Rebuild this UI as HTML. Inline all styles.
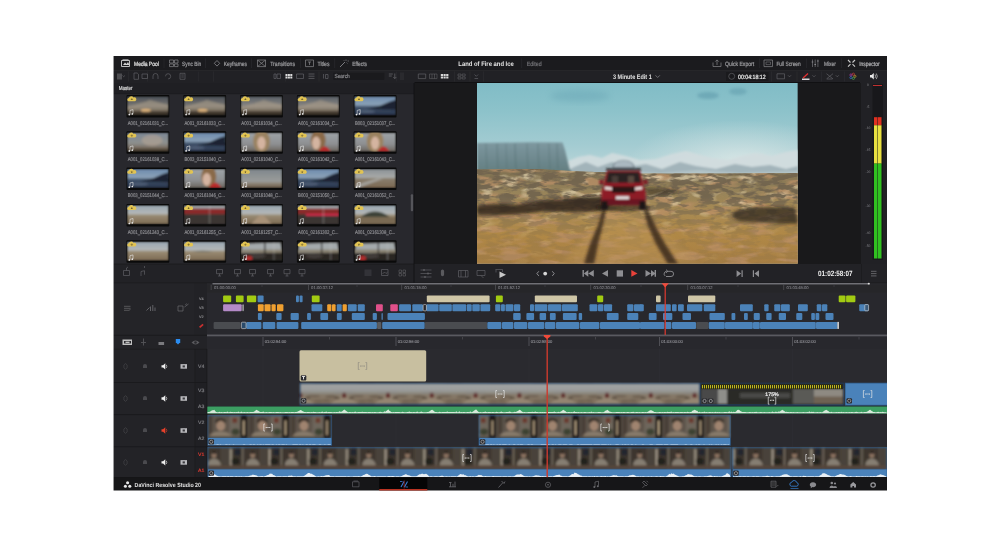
<!DOCTYPE html><html><head><meta charset="utf-8"><style>html,body{margin:0;padding:0;background:#fff;width:1000px;height:547px;overflow:hidden;}#w{position:absolute;left:0;top:0;width:1000px;height:547px;will-change:transform;}svg{position:absolute;left:0;top:0;}text{text-rendering:geometricPrecision;}</style></head><body>
<div id="w">
<svg width="1000" height="547" viewBox="0 0 1000 547" font-family="Liberation Sans">
<defs><filter id="tb" x="-10%" y="-10%" width="120%" height="120%"><feGaussianBlur stdDeviation="0.9"/></filter><linearGradient id="tg1" x1="0" y1="0" x2="0" y2="1"><stop offset="0" stop-color="#4a5058"/><stop offset="0.5" stop-color="#787672"/><stop offset="0.72" stop-color="#8a7e6c"/><stop offset="0.8" stop-color="#4a4036"/><stop offset="1" stop-color="#2e2822"/></linearGradient><linearGradient id="tg2" x1="0" y1="0" x2="0" y2="1"><stop offset="0" stop-color="#4a5058"/><stop offset="0.5" stop-color="#787672"/><stop offset="0.72" stop-color="#8a7e6c"/><stop offset="0.8" stop-color="#4a4036"/><stop offset="1" stop-color="#2e2822"/></linearGradient><linearGradient id="tg3" x1="0" y1="0" x2="0" y2="1"><stop offset="0" stop-color="#5a6068"/><stop offset="0.5" stop-color="#868480"/><stop offset="0.72" stop-color="#8a7e6c"/><stop offset="0.8" stop-color="#4a4036"/><stop offset="1" stop-color="#2e2822"/></linearGradient><linearGradient id="tg4" x1="0" y1="0" x2="0" y2="1"><stop offset="0" stop-color="#5a6068"/><stop offset="0.5" stop-color="#868480"/><stop offset="0.72" stop-color="#8a7e6c"/><stop offset="0.8" stop-color="#4a4036"/><stop offset="1" stop-color="#2e2822"/></linearGradient><linearGradient id="tg5" x1="0" y1="0" x2="0" y2="1"><stop offset="0" stop-color="#6c8aac"/><stop offset="0.45" stop-color="#8ca2b8"/><stop offset="0.55" stop-color="#42546c"/><stop offset="1" stop-color="#26324a"/></linearGradient><linearGradient id="tg6" x1="0" y1="0" x2="0" y2="1"><stop offset="0" stop-color="#7c8896"/><stop offset="0.55" stop-color="#8e908e"/><stop offset="0.78" stop-color="#7a7064"/><stop offset="0.85" stop-color="#5a4e40"/><stop offset="1" stop-color="#3e342a"/></linearGradient><linearGradient id="tg7" x1="0" y1="0" x2="0" y2="1"><stop offset="0" stop-color="#6c8aac"/><stop offset="0.45" stop-color="#8ca2b8"/><stop offset="0.55" stop-color="#42546c"/><stop offset="1" stop-color="#26324a"/></linearGradient><linearGradient id="tg8" x1="0" y1="0" x2="0" y2="1"><stop offset="0" stop-color="#9ea4a8"/><stop offset="0.6" stop-color="#8e9092"/><stop offset="1" stop-color="#6a645c"/></linearGradient><linearGradient id="tg9" x1="0" y1="0" x2="0" y2="1"><stop offset="0" stop-color="#9ea4a8"/><stop offset="0.6" stop-color="#8e9092"/><stop offset="1" stop-color="#6a645c"/></linearGradient><linearGradient id="tg10" x1="0" y1="0" x2="0" y2="1"><stop offset="0" stop-color="#9ea4a8"/><stop offset="0.6" stop-color="#8e9092"/><stop offset="1" stop-color="#6a645c"/></linearGradient><linearGradient id="tg11" x1="0" y1="0" x2="0" y2="1"><stop offset="0" stop-color="#6c8aac"/><stop offset="0.45" stop-color="#8ca2b8"/><stop offset="0.55" stop-color="#42546c"/><stop offset="1" stop-color="#26324a"/></linearGradient><linearGradient id="tg12" x1="0" y1="0" x2="0" y2="1"><stop offset="0" stop-color="#9ea4a8"/><stop offset="0.6" stop-color="#8e9092"/><stop offset="1" stop-color="#6a645c"/></linearGradient><linearGradient id="tg13" x1="0" y1="0" x2="0" y2="1"><stop offset="0" stop-color="#7e868c"/><stop offset="0.65" stop-color="#9a9c9a"/><stop offset="0.78" stop-color="#8a8070"/><stop offset="1" stop-color="#6a5a48"/></linearGradient><linearGradient id="tg14" x1="0" y1="0" x2="0" y2="1"><stop offset="0" stop-color="#6c8aac"/><stop offset="0.45" stop-color="#8ca2b8"/><stop offset="0.55" stop-color="#42546c"/><stop offset="1" stop-color="#26324a"/></linearGradient><linearGradient id="tg15" x1="0" y1="0" x2="0" y2="1"><stop offset="0" stop-color="#8a9096"/><stop offset="0.45" stop-color="#a8aaa8"/><stop offset="0.5" stop-color="#8a8070"/><stop offset="1" stop-color="#7a6650"/></linearGradient><linearGradient id="tg16" x1="0" y1="0" x2="0" y2="1"><stop offset="0" stop-color="#98a6b0"/><stop offset="0.45" stop-color="#b4b8b8"/><stop offset="0.52" stop-color="#9a8c74"/><stop offset="1" stop-color="#7c6a52"/></linearGradient><linearGradient id="tg17" x1="0" y1="0" x2="0" y2="1"><stop offset="0" stop-color="#98a6b0"/><stop offset="0.45" stop-color="#b4b8b8"/><stop offset="0.52" stop-color="#9a8c74"/><stop offset="1" stop-color="#7c6a52"/></linearGradient><linearGradient id="tg18" x1="0" y1="0" x2="0" y2="1"><stop offset="0" stop-color="#98a6b0"/><stop offset="0.45" stop-color="#b4b8b8"/><stop offset="0.52" stop-color="#9a8c74"/><stop offset="1" stop-color="#7c6a52"/></linearGradient><linearGradient id="tg19" x1="0" y1="0" x2="0" y2="1"><stop offset="0" stop-color="#98a6b0"/><stop offset="0.45" stop-color="#b4b8b8"/><stop offset="0.52" stop-color="#9a8c74"/><stop offset="1" stop-color="#7c6a52"/></linearGradient><linearGradient id="tg20" x1="0" y1="0" x2="0" y2="1"><stop offset="0" stop-color="#98a6b0"/><stop offset="0.45" stop-color="#b4b8b8"/><stop offset="0.52" stop-color="#9a8c74"/><stop offset="1" stop-color="#7c6a52"/></linearGradient><filter id="bl1" x="-5%" y="-5%" width="110%" height="110%"><feGaussianBlur stdDeviation="0.85"/></filter><filter id="bl2" x="-20%" y="-20%" width="140%" height="140%"><feGaussianBlur stdDeviation="1.5"/></filter><filter id="bl3" x="-30%" y="-30%" width="160%" height="160%"><feGaussianBlur stdDeviation="3"/></filter><clipPath id="vclip"><rect x="477.0" y="83.0" width="320.8" height="180.8"/></clipPath><filter id="moss" x="470" y="160" width="340" height="110" filterUnits="userSpaceOnUse"><feTurbulence type="fractalNoise" baseFrequency="0.07 0.2" numOctaves="3" seed="4" result="n"/><feColorMatrix in="n" type="matrix" values="0 0 0 0 0.17  0 0 0 0 0.13  0 0 0 0 0.08  -6 0 0 0 3.45" result="d"/><feComposite in="d" in2="SourceGraphic" operator="in" result="c"/><feGaussianBlur in="c" stdDeviation="0.35"/></filter><linearGradient id="mmg" x1="0" y1="0" x2="0" y2="1"><stop offset="0" stop-color="#fff"/><stop offset="0.32" stop-color="#fff"/><stop offset="0.5" stop-color="#777"/><stop offset="0.7" stop-color="#333"/><stop offset="1" stop-color="#1a1a1a"/></linearGradient><mask id="mmask" maskUnits="userSpaceOnUse" x="470" y="160" width="340" height="110"><rect x="470" y="165" width="340" height="100" fill="url(#mmg)"/></mask><filter id="moss2" x="470" y="160" width="340" height="110" filterUnits="userSpaceOnUse"><feTurbulence type="fractalNoise" baseFrequency="0.05 0.12" numOctaves="2" seed="9" result="n"/><feColorMatrix in="n" type="matrix" values="0 0 0 0 0.85  0 0 0 0 0.74  0 0 0 0 0.50  5 0 0 0 -2.7" result="d"/><feComposite in="d" in2="SourceGraphic" operator="in"/></filter><filter id="red" x="470" y="160" width="340" height="110" filterUnits="userSpaceOnUse"><feTurbulence type="fractalNoise" baseFrequency="0.04 0.15" numOctaves="2" seed="21" result="n"/><feColorMatrix in="n" type="matrix" values="0 0 0 0 0.50  0 0 0 0 0.28  0 0 0 0 0.14  -5 0 0 0 2.6" result="d"/><feComposite in="d" in2="SourceGraphic" operator="in"/></filter><linearGradient id="sky" x1="0" y1="0" x2="0" y2="1"><stop offset="0" stop-color="#80bcc6"/><stop offset="0.15" stop-color="#8cc2ca"/><stop offset="0.35" stop-color="#a4ccd2"/><stop offset="0.5" stop-color="#bed8da"/><stop offset="0.62" stop-color="#d0e0e0"/><stop offset="1" stop-color="#dce6e4"/></linearGradient><radialGradient id="glow" cx="0.5" cy="0.5" r="0.5"><stop offset="0" stop-color="#e4ecea" stop-opacity="0.7"/><stop offset="1" stop-color="#e4ecea" stop-opacity="0"/></radialGradient><linearGradient id="mesa" x1="0" y1="0" x2="0" y2="1"><stop offset="0" stop-color="#7e98a0"/><stop offset="0.5" stop-color="#708a90"/><stop offset="1" stop-color="#627e80"/></linearGradient><linearGradient id="gnd" x1="0" y1="0" x2="0" y2="1"><stop offset="0" stop-color="#7e7052"/><stop offset="0.25" stop-color="#98845a"/><stop offset="0.45" stop-color="#a88a52"/><stop offset="0.7" stop-color="#b08846"/><stop offset="1" stop-color="#a67e44"/></linearGradient><clipPath id="tlclip"><rect x="207.3" y="349" width="679.7" height="128"/></clipPath><pattern id="desP" x="322.2" y="383.6" width="43.8" height="20.4" patternUnits="userSpaceOnUse"><rect width="43.8" height="20.4" fill="url(#desG)"/><path d="M22 10 L8 20.4 L36 20.4 Z" fill="#a89a86" opacity="0.5"/><ellipse cx="9" cy="13" rx="6" ry="1.6" fill="#5a4e40" opacity="0.5"/><ellipse cx="35" cy="12.5" rx="7" ry="1.4" fill="#5a4e40" opacity="0.45"/><ellipse cx="4" cy="17" rx="4" ry="1.5" fill="#5a4e40" opacity="0.4"/><ellipse cx="40" cy="17.5" rx="4" ry="1.5" fill="#5a4e40" opacity="0.4"/><path d="M19.6 14 L20.5 9 L23.5 9 L24.4 14 Z" fill="#5e2c2a"/><ellipse cx="15" cy="14.5" rx="3" ry="1.2" fill="#4a3e32" opacity="0.6"/><ellipse cx="29" cy="14.5" rx="3" ry="1.2" fill="#4a3e32" opacity="0.6"/><rect x="12" y="8" width="20" height="2.2" fill="#8a8a86" opacity="0.5"/></pattern><linearGradient id="desG" x1="0" y1="0" x2="0" y2="1"><stop offset="0" stop-color="#a0a2a2"/><stop offset="0.3" stop-color="#9c9e9e"/><stop offset="0.45" stop-color="#8e8c84"/><stop offset="0.55" stop-color="#867a6a"/><stop offset="1" stop-color="#7e6c58"/></linearGradient><pattern id="manP" x="207.5" y="415.8" width="41.6" height="22" patternUnits="userSpaceOnUse"><rect width="41.6" height="22" fill="#5e554c"/><rect x="0" y="0" width="5" height="22" fill="#4a4038"/><rect x="22" y="0" width="11" height="22" fill="#6e665c"/><rect x="25" y="2" width="4.5" height="5" fill="#6a3a2e"/><rect x="33" y="0" width="7" height="22" fill="#1c1814"/><rect x="35.6" y="4.5" width="1.4" height="15" fill="#dcc4a0"/><ellipse cx="28" cy="16" rx="4" ry="3.2" fill="#3e4232"/><ellipse cx="13" cy="5.2" rx="5.4" ry="3" fill="#3a322a"/><ellipse cx="13.3" cy="10" rx="4.4" ry="4.9" fill="#a08470"/><path d="M1 22 Q3 15.5 13 15.8 Q22 15.5 25 22 Z" fill="#887c6c"/><rect x="0" y="20.6" width="33" height="1.4" fill="#4e4032"/></pattern><pattern id="manP2" x="539.2" y="415.8" width="41.6" height="22" patternUnits="userSpaceOnUse"><rect width="41.6" height="22" fill="#5e554c"/><rect x="0" y="0" width="5" height="22" fill="#4a4038"/><rect x="22" y="0" width="11" height="22" fill="#6e665c"/><rect x="25" y="2" width="4.5" height="5" fill="#6a3a2e"/><rect x="33" y="0" width="7" height="22" fill="#1c1814"/><rect x="35.6" y="4.5" width="1.4" height="15" fill="#dcc4a0"/><ellipse cx="28" cy="16" rx="4" ry="3.2" fill="#3e4232"/><ellipse cx="13" cy="5.2" rx="5.4" ry="3" fill="#3a322a"/><ellipse cx="13.3" cy="10" rx="4.4" ry="4.9" fill="#a08470"/><path d="M1 22 Q3 15.5 13 15.8 Q22 15.5 25 22 Z" fill="#887c6c"/><rect x="0" y="20.6" width="33" height="1.4" fill="#4e4032"/></pattern><pattern id="deskP" x="207.5" y="447.8" width="38.7" height="21.4" patternUnits="userSpaceOnUse"><rect width="38.7" height="21.4" fill="#3c352e"/><rect x="13" y="0" width="10" height="21.4" fill="#4a433a"/><rect x="27" y="1.5" width="6" height="6" fill="#22262e"/><rect x="22.5" y="1" width="1.8" height="17" fill="#aea494"/><rect x="34.5" y="0" width="1.4" height="18" fill="#7a7264"/><ellipse cx="28" cy="13.5" rx="4" ry="3.5" fill="#24221e"/><ellipse cx="6.5" cy="7" rx="2.5" ry="3.1" fill="#8e7462"/><ellipse cx="6.5" cy="4.6" rx="2.5" ry="1.5" fill="#2e2620"/><path d="M-1 19 Q0.5 10.8 6.5 10.8 Q12.5 10.8 14 19 Z" fill="#867e72"/><rect x="0" y="17.6" width="38.7" height="3.8" fill="#54443a"/></pattern></defs>
<rect x="113.00" y="56.00" width="774.00" height="434.00" fill="#1c1c1f" />
<rect x="113.00" y="56.00" width="774.00" height="14.00" fill="#1b1b1e" />
<rect x="113.00" y="70.00" width="774.00" height="13.00" fill="#212125" />
<rect x="113.00" y="83.00" width="301.00" height="11.00" fill="#1f1f23" />
<rect x="113.00" y="94.00" width="301.00" height="170.00" fill="#28282d" />
<rect x="113.00" y="93.00" width="301.00" height="1.00" fill="#1f1f23" />
<rect x="113.00" y="264.00" width="301.00" height="19.00" fill="#222226" />
<rect x="414.00" y="83.00" width="446.00" height="181.00" fill="#19191b" />
<rect x="860.00" y="83.00" width="27.00" height="181.00" fill="#212125" />
<rect x="414.00" y="264.00" width="473.00" height="19.00" fill="#222226" />
<rect x="113.00" y="283.00" width="81.00" height="52.00" fill="#242428" />
<rect x="194.00" y="283.00" width="13.00" height="52.00" fill="#222226" />
<rect x="207.00" y="283.00" width="680.00" height="52.00" fill="#28282d" />
<rect x="113.00" y="335.00" width="94.00" height="14.00" fill="#232327" />
<rect x="207.00" y="335.00" width="680.00" height="14.00" fill="#28282d" />
<rect x="113.00" y="349.00" width="82.00" height="128.00" fill="#232327" />
<rect x="195.00" y="349.00" width="12.00" height="128.00" fill="#202024" />
<rect x="207.00" y="349.00" width="680.00" height="128.00" fill="#2a2a2f" />
<rect x="113.00" y="477.00" width="774.00" height="13.00" fill="#161618" />
<rect x="163.70" y="58.50" width="0.60" height="9.50" fill="#2c2c30" />
<rect x="205.40" y="58.50" width="0.60" height="9.50" fill="#2c2c30" />
<rect x="251.40" y="58.50" width="0.60" height="9.50" fill="#2c2c30" />
<rect x="300.00" y="58.50" width="0.60" height="9.50" fill="#2c2c30" />
<rect x="334.50" y="58.50" width="0.60" height="9.50" fill="#2c2c30" />
<rect x="521.50" y="58.50" width="0.60" height="9.50" fill="#2c2c30" />
<rect x="759.00" y="58.50" width="0.60" height="9.50" fill="#2c2c30" />
<rect x="806.10" y="58.50" width="0.60" height="9.50" fill="#2c2c30" />
<rect x="841.20" y="58.50" width="0.60" height="9.50" fill="#2c2c30" />
<path d="M121.5 60.5 h8 v6 h-8 z" fill="none" stroke="#d0d0d0" stroke-width="0.9" />
<path d="M122.5 59.5 h6" fill="none" stroke="#d0d0d0" stroke-width="0.6" />
<path d="M123 65 l2 -2.5 l1.5 1.5 l1.5 -2 l1.5 3 z" fill="#d0d0d0" stroke="none" stroke-width="1" />
<text x="134.00" y="65.56" font-size="6.2" fill="#e0e0e0" font-weight="normal" text-anchor="start" font-family="Liberation Sans" textLength="24.80" lengthAdjust="spacingAndGlyphs" stroke="#e0e0e0" stroke-width="0.22">Media Pool</text>
<path d="M169.5 60 h4 v3 h-4z M174.5 60 h3.5 v3 h-3.5z M169.5 64 h4 v2.6 h-4z M174.5 64 h3.5 v2.6 h-3.5z" fill="none" stroke="#86868a" stroke-width="0.7" />
<text x="182.00" y="65.56" font-size="6.2" fill="#9c9c9f" font-weight="normal" text-anchor="start" font-family="Liberation Sans" textLength="19.20" lengthAdjust="spacingAndGlyphs" stroke="#9c9c9f" stroke-width="0.22">Sync Bin</text>
<path d="M217 60.5 l2.7 2.8 l-2.7 2.8 l-2.7 -2.8z" fill="none" stroke="#86868a" stroke-width="0.8" />
<text x="223.70" y="65.56" font-size="6.2" fill="#9c9c9f" font-weight="normal" text-anchor="start" font-family="Liberation Sans" textLength="23.30" lengthAdjust="spacingAndGlyphs" stroke="#9c9c9f" stroke-width="0.22">Keyframes</text>
<path d="M257.5 60 h8 v6.6 h-8z M257.5 60 l8 6.6 M265.5 60 l-8 6.6" fill="none" stroke="#86868a" stroke-width="0.7" />
<text x="270.20" y="65.56" font-size="6.2" fill="#9c9c9f" font-weight="normal" text-anchor="start" font-family="Liberation Sans" textLength="24.80" lengthAdjust="spacingAndGlyphs" stroke="#9c9c9f" stroke-width="0.22">Transitions</text>
<path d="M305.5 60 h8 v6.6 h-8z" fill="none" stroke="#86868a" stroke-width="0.7" />
<path d="M308 62 h3 M309.5 62 v3" fill="none" stroke="#86868a" stroke-width="0.7" />
<text x="317.50" y="65.56" font-size="6.2" fill="#9c9c9f" font-weight="normal" text-anchor="start" font-family="Liberation Sans" textLength="12.00" lengthAdjust="spacingAndGlyphs" stroke="#9c9c9f" stroke-width="0.22">Titles</text>
<path d="M340 67 l5 -5" fill="none" stroke="#86868a" stroke-width="0.9" />
<path d="M346 59.5 v1.5 M347.5 61 h1.5 M346.5 62.5 l1 1 M343.5 60 l0.8 0.8" fill="none" stroke="#86868a" stroke-width="0.6" />
<text x="352.30" y="65.56" font-size="6.2" fill="#9c9c9f" font-weight="normal" text-anchor="start" font-family="Liberation Sans" textLength="14.70" lengthAdjust="spacingAndGlyphs" stroke="#9c9c9f" stroke-width="0.22">Effects</text>
<text x="458.30" y="65.71" font-size="6.6" fill="#e6e6e6" font-weight="bold" text-anchor="start" font-family="Liberation Sans" textLength="55.50" lengthAdjust="spacingAndGlyphs">Land of Fire and Ice</text>
<text x="526.70" y="65.56" font-size="6.2" fill="#6e6e72" font-weight="normal" text-anchor="start" font-family="Liberation Sans" textLength="15.00" lengthAdjust="spacingAndGlyphs" stroke="#6e6e72" stroke-width="0.22">Edited</text>
<path d="M713 62.5 v4 h8 v-4 M717 65 v-5 M715.3 61.6 l1.7 -1.7 l1.7 1.7" fill="none" stroke="#86868a" stroke-width="0.7" />
<text x="725.00" y="65.56" font-size="6.2" fill="#9c9c9f" font-weight="normal" text-anchor="start" font-family="Liberation Sans" textLength="29.20" lengthAdjust="spacingAndGlyphs" stroke="#9c9c9f" stroke-width="0.22">Quick Export</text>
<path d="M764 60 h8.5 v6.6 h-8.5z" fill="none" stroke="#86868a" stroke-width="0.7" />
<path d="M766 62 h4.5 v2.6 h-4.5z" fill="none" stroke="#86868a" stroke-width="0.5" />
<text x="776.40" y="65.56" font-size="6.2" fill="#9c9c9f" font-weight="normal" text-anchor="start" font-family="Liberation Sans" textLength="24.30" lengthAdjust="spacingAndGlyphs" stroke="#9c9c9f" stroke-width="0.22">Full Screen</text>
<path d="M812.5 59.5 v7.5 M815.2 59.5 v7.5 M817.9 59.5 v7.5" fill="none" stroke="#86868a" stroke-width="0.6" />
<path d="M811.7 62 h1.6 M814.4 64.5 h1.6 M817.1 61 h1.6" fill="none" stroke="#86868a" stroke-width="1" />
<text x="823.90" y="65.56" font-size="6.2" fill="#9c9c9f" font-weight="normal" text-anchor="start" font-family="Liberation Sans" textLength="12.00" lengthAdjust="spacingAndGlyphs" stroke="#9c9c9f" stroke-width="0.22">Mixer</text>
<path d="M848 60 l2.5 2.5 M855 60 l-2.5 2.5 M848 66.6 l2.5 -2.5 M855 66.6 l-2.5 -2.5" fill="none" stroke="#c8c8c8" stroke-width="1.1" />
<text x="859.20" y="65.56" font-size="6.2" fill="#b0b0b3" font-weight="normal" text-anchor="start" font-family="Liberation Sans" textLength="20.40" lengthAdjust="spacingAndGlyphs" stroke="#b0b0b3" stroke-width="0.22">Inspector</text>
<rect x="128.20" y="71.50" width="0.60" height="10.00" fill="#2e2e33" />
<rect x="147.20" y="71.50" width="0.60" height="10.00" fill="#2e2e33" />
<rect x="197.90" y="71.50" width="0.60" height="10.00" fill="#2e2e33" />
<rect x="213.20" y="71.50" width="0.60" height="10.00" fill="#2e2e33" />
<rect x="285.20" y="71.50" width="0.60" height="10.00" fill="#2e2e33" />
<rect x="318.70" y="71.50" width="0.60" height="10.00" fill="#2e2e33" />
<rect x="396.50" y="71.50" width="0.60" height="10.00" fill="#2e2e33" />
<rect x="454.00" y="71.50" width="0.60" height="10.00" fill="#2e2e33" />
<rect x="469.70" y="71.50" width="0.60" height="10.00" fill="#2e2e33" />
<rect x="483.20" y="71.50" width="0.60" height="10.00" fill="#2e2e33" />
<rect x="771.00" y="71.50" width="0.60" height="10.00" fill="#2e2e33" />
<rect x="796.70" y="71.50" width="0.60" height="10.00" fill="#2e2e33" />
<rect x="821.30" y="71.50" width="0.60" height="10.00" fill="#2e2e33" />
<rect x="844.10" y="71.50" width="0.60" height="10.00" fill="#2e2e33" />
<rect x="113.00" y="70.00" width="774.00" height="0.60" fill="#2a2a2e" />
<path d="M117 73.5 h5 v6 h-5z" fill="#4c4c50" stroke="none" stroke-width="1" />
<path d="M122.5 75.5 l1.2 1.2 l1.2 -1.2" fill="none" stroke="#6a6a6e" stroke-width="0.6" />
<path d="M134 73 h3.2 l1.3 1.3 v5 h-4.5z" fill="none" stroke="#6a6a6e" stroke-width="0.6" />
<path d="M142 74 h5.5 v4.5 h-5.5z" fill="none" stroke="#6a6a6e" stroke-width="0.6" />
<path d="M153 79 v-3 a2.5 2.5 0 0 1 5 0 v3" fill="none" stroke="#6a6a6e" stroke-width="0.6" />
<path d="M165.5 76.3 a2.6 2.6 0 1 1 2.6 2.6" fill="none" stroke="#6a6a6e" stroke-width="0.6" />
<path d="M180 73.3 h5 v6 h-5z M181.3 75 h2.5 M181.3 77 h2.5" fill="none" stroke="#6a6a6e" stroke-width="0.6" />
<path d="M274 74 h2 v4.5 h-2z M277 74 h3.5 v4.5 h-3.5z" fill="none" stroke="#6a6a6e" stroke-width="0.6" />
<rect x="285.50" y="74.00" width="2.00" height="2.00" fill="#dcdcdc" />
<rect x="285.50" y="76.50" width="2.00" height="2.00" fill="#dcdcdc" />
<rect x="287.90" y="74.00" width="2.00" height="2.00" fill="#dcdcdc" />
<rect x="287.90" y="76.50" width="2.00" height="2.00" fill="#dcdcdc" />
<rect x="290.30" y="74.00" width="2.00" height="2.00" fill="#dcdcdc" />
<rect x="290.30" y="76.50" width="2.00" height="2.00" fill="#dcdcdc" />
<path d="M296.5 74 h7 v4.5 h-7z" fill="none" stroke="#6a6a6e" stroke-width="0.6" />
<path d="M308.5 74 h6 M308.5 76.2 h6 M308.5 78.4 h6" fill="none" stroke="#6a6a6e" stroke-width="0.7" />
<path d="M323.5 74 v4.5 M325.5 74.5 h2.5 v4 h-2.5z" fill="none" stroke="#6a6a6e" stroke-width="0.6" />
<rect x="333.30" y="72.80" width="51.00" height="7.00" fill="#1a1a1d" />
<text x="334.50" y="78.41" font-size="5.8" fill="#8c8c90" font-weight="normal" text-anchor="start" font-family="Liberation Sans" textLength="15.20" lengthAdjust="spacingAndGlyphs" stroke="#8c8c90" stroke-width="0.22">Search</text>
<path d="M388.8 74 h4 M388.8 76 h3 M394.8 73.5 v5 M393.3 77 l1.5 1.6 l1.5 -1.6" fill="none" stroke="#6a6a6e" stroke-width="0.7" />
<rect x="400.00" y="72.50" width="4.00" height="7.50" fill="#2a2a2e" />
<path d="M418.3 74 h7.4 v4.6 h-7.4z" fill="none" stroke="#6a6a6e" stroke-width="0.6" />
<path d="M429.5 74 h7.5 v4.6 h-7.5z M432 74 v4.6 M434.5 74 v4.6" fill="none" stroke="#6a6a6e" stroke-width="0.5" />
<rect x="440.80" y="74.00" width="2.20" height="2.00" fill="#d8d8d8" />
<rect x="440.80" y="76.50" width="2.20" height="2.00" fill="#d8d8d8" />
<rect x="443.50" y="74.00" width="2.20" height="2.00" fill="#d8d8d8" />
<rect x="443.50" y="76.50" width="2.20" height="2.00" fill="#d8d8d8" />
<rect x="446.20" y="74.00" width="2.20" height="2.00" fill="#d8d8d8" />
<rect x="446.20" y="76.50" width="2.20" height="2.00" fill="#d8d8d8" />
<path d="M458 74 h3 v2 h-3z M462.2 74 h3 v2 h-3z M458 77 h3 v2 h-3z M462.2 77 h3 v2 h-3z" fill="none" stroke="#6a6a6e" stroke-width="0.5" />
<path d="M474.5 74.5 l1.8 1.8 l1.8 -1.8 M474.5 78.5 h3.6" fill="none" stroke="#6a6a6e" stroke-width="0.6" />
<text x="613.00" y="78.71" font-size="6.6" fill="#e4e4e4" font-weight="bold" text-anchor="start" font-family="Liberation Sans" textLength="38.70" lengthAdjust="spacingAndGlyphs">3 Minute Edit 1</text>
<path d="M655.5 75.3 l2.2 2.2 l2.2 -2.2" fill="none" stroke="#8a8a8e" stroke-width="0.7" />
<rect x="726.00" y="72.00" width="42.50" height="8.80" fill="#1a1a1d" />
<path d="M728.7 76.3 a3 3 0 1 1 6 0 a3 3 0 1 1 -6 0" fill="none" stroke="#6a6a6e" stroke-width="0.6" />
<text x="738.00" y="78.56" font-size="6.2" fill="#ececec" font-weight="normal" text-anchor="start" font-family="Liberation Sans" textLength="27.60" lengthAdjust="spacingAndGlyphs" stroke="#ececec" stroke-width="0.22">00:04:18:12</text>
<path d="M777 73.8 h7.5 v5 h-7.5z" fill="none" stroke="#6a6a6e" stroke-width="0.6" />
<path d="M788 75.3 l1.5 1.5 l1.5 -1.5" fill="none" stroke="#6a6a6e" stroke-width="0.6" />
<path d="M802 78.5 h7.5 v1.5 h-7.5z" fill="#d8d8d8" stroke="none" stroke-width="1" />
<path d="M803 78 l5 -4.5" fill="none" stroke="#e03030" stroke-width="1.3" />
<path d="M812.5 75.3 l1.5 1.5 l1.5 -1.5" fill="none" stroke="#6a6a6e" stroke-width="0.6" />
<path d="M826.5 73.7 l6.5 5.2 M833 73.7 l-6.5 5.2 M827 79 h5.5" fill="none" stroke="#6a6a6e" stroke-width="0.6" />
<path d="M835.8 75.3 l1.5 1.5 l1.5 -1.5" fill="none" stroke="#6a6a6e" stroke-width="0.6" />
<circle cx="854.90" cy="76.30" r="1.1" fill="none" stroke="#e0b030" stroke-width="0.6"/>
<circle cx="853.38" cy="78.39" r="1.1" fill="none" stroke="#50c050" stroke-width="0.6"/>
<circle cx="850.92" cy="77.59" r="1.1" fill="none" stroke="#3080e0" stroke-width="0.6"/>
<circle cx="850.92" cy="75.01" r="1.1" fill="none" stroke="#c040c0" stroke-width="0.6"/>
<circle cx="853.38" cy="74.21" r="1.1" fill="none" stroke="#e04040" stroke-width="0.6"/>
<path d="M870 75 h1.6 l2.2 -2 v6.6 l-2.2 -2 h-1.6z" fill="#e8e8e8" stroke="none" stroke-width="1" />
<path d="M875 74.5 q1.2 1.8 0 3.6 M876.3 73.5 q2 2.8 0 5.6" fill="none" stroke="#e8e8e8" stroke-width="0.6" />
<text x="118.70" y="90.41" font-size="5.8" fill="#d8d8d8" font-weight="normal" text-anchor="start" font-family="Liberation Sans" textLength="13.80" lengthAdjust="spacingAndGlyphs" stroke="#d8d8d8" stroke-width="0.22">Master</text>
<rect x="113.00" y="93.70" width="301.00" height="0.50" fill="#1a1a1d" />
<rect x="410.80" y="194.20" width="2.40" height="17.10" fill="#55555a" rx="1"/>
<rect x="126.50" y="95.00" width="42.80" height="22.50" fill="#0a0a0a" rx="1"/>
<clipPath id="tc1"><rect x="127.10" y="96.30" width="41.60" height="19.10"/></clipPath>
<g clip-path="url(#tc1)"><g filter="url(#tb)">
<rect x="127.10" y="96.30" width="41.60" height="19.10" fill="url(#tg1)" />
<path d="M127.10 106.80 Q143.74 102.98 149.98 100.12 Q156.22 102.03 168.70 104.89 L168.70 107.76 Q147.90 106.80 127.10 108.72 Z" fill="#aa9c88" stroke="none" stroke-width="1" opacity="0.6"/>
<ellipse cx="145.82" cy="110.24" rx="4.99" ry="1.53" fill="#f0c080" opacity="0.85"/>
</g></g>
<path d="M128.40 101.20 a1.7 1.7 0 0 1 0.5 -3.3 a2.5 2.5 0 0 1 4.6 -0.3 a1.9 1.9 0 0 1 1.7 3.6 z" fill="#e2c452" stroke="none" stroke-width="1" />
<path d="M131.80 98.30 v1.6 M131.00 99.20 l0.8 0.8 l0.8 -0.8" fill="none" stroke="#3a3420" stroke-width="0.55" />
<path d="M130.00 114.60 v-4.2 l3.0 -0.8 v4.0" fill="none" stroke="#e8e8e8" stroke-width="0.6" fill="none"/>
<circle cx="129.30" cy="114.60" r="0.85" fill="#e8e8e8"/><circle cx="132.30" cy="113.90" r="0.85" fill="#e8e8e8"/>
<text x="127.70" y="124.77" font-size="5.4" fill="#8a8a8e" font-weight="normal" text-anchor="start" font-family="Liberation Sans" textLength="40.40" lengthAdjust="spacingAndGlyphs" stroke="#8a8a8e" stroke-width="0.22">A001_02161031_C...</text>
<rect x="183.30" y="95.00" width="42.80" height="22.50" fill="#0a0a0a" rx="1"/>
<clipPath id="tc2"><rect x="183.90" y="96.30" width="41.60" height="19.10"/></clipPath>
<g clip-path="url(#tc2)"><g filter="url(#tb)">
<rect x="183.90" y="96.30" width="41.60" height="19.10" fill="url(#tg2)" />
<path d="M183.90 106.80 Q200.54 102.98 206.78 100.12 Q213.02 102.03 225.50 104.89 L225.50 107.76 Q204.70 106.80 183.90 108.72 Z" fill="#aa9c88" stroke="none" stroke-width="1" opacity="0.6"/>
<ellipse cx="202.62" cy="110.24" rx="4.99" ry="1.53" fill="#f0c080" opacity="0.85"/>
</g></g>
<path d="M185.20 101.20 a1.7 1.7 0 0 1 0.5 -3.3 a2.5 2.5 0 0 1 4.6 -0.3 a1.9 1.9 0 0 1 1.7 3.6 z" fill="#e2c452" stroke="none" stroke-width="1" />
<path d="M188.60 98.30 v1.6 M187.80 99.20 l0.8 0.8 l0.8 -0.8" fill="none" stroke="#3a3420" stroke-width="0.55" />
<path d="M186.80 114.60 v-4.2 l3.0 -0.8 v4.0" fill="none" stroke="#e8e8e8" stroke-width="0.6" fill="none"/>
<circle cx="186.10" cy="114.60" r="0.85" fill="#e8e8e8"/><circle cx="189.10" cy="113.90" r="0.85" fill="#e8e8e8"/>
<text x="184.50" y="124.77" font-size="5.4" fill="#8a8a8e" font-weight="normal" text-anchor="start" font-family="Liberation Sans" textLength="40.40" lengthAdjust="spacingAndGlyphs" stroke="#8a8a8e" stroke-width="0.22">A001_02161033_C...</text>
<rect x="240.10" y="95.00" width="42.80" height="22.50" fill="#0a0a0a" rx="1"/>
<clipPath id="tc3"><rect x="240.70" y="96.30" width="41.60" height="19.10"/></clipPath>
<g clip-path="url(#tc3)"><g filter="url(#tb)">
<rect x="240.70" y="96.30" width="41.60" height="19.10" fill="url(#tg3)" />
<path d="M240.70 106.80 Q257.34 102.98 263.58 100.12 Q269.82 102.03 282.30 104.89 L282.30 107.76 Q261.50 106.80 240.70 108.72 Z" fill="#aa9c88" stroke="none" stroke-width="1" opacity="0.6"/>
</g></g>
<path d="M242.00 101.20 a1.7 1.7 0 0 1 0.5 -3.3 a2.5 2.5 0 0 1 4.6 -0.3 a1.9 1.9 0 0 1 1.7 3.6 z" fill="#e2c452" stroke="none" stroke-width="1" />
<path d="M245.40 98.30 v1.6 M244.60 99.20 l0.8 0.8 l0.8 -0.8" fill="none" stroke="#3a3420" stroke-width="0.55" />
<path d="M243.60 114.60 v-4.2 l3.0 -0.8 v4.0" fill="none" stroke="#e8e8e8" stroke-width="0.6" fill="none"/>
<circle cx="242.90" cy="114.60" r="0.85" fill="#e8e8e8"/><circle cx="245.90" cy="113.90" r="0.85" fill="#e8e8e8"/>
<text x="241.30" y="124.77" font-size="5.4" fill="#8a8a8e" font-weight="normal" text-anchor="start" font-family="Liberation Sans" textLength="40.40" lengthAdjust="spacingAndGlyphs" stroke="#8a8a8e" stroke-width="0.22">A001_02161034_C...</text>
<rect x="296.90" y="95.00" width="42.80" height="22.50" fill="#0a0a0a" rx="1"/>
<clipPath id="tc4"><rect x="297.50" y="96.30" width="41.60" height="19.10"/></clipPath>
<g clip-path="url(#tc4)"><g filter="url(#tb)">
<rect x="297.50" y="96.30" width="41.60" height="19.10" fill="url(#tg4)" />
<path d="M297.50 106.80 Q314.14 102.98 320.38 100.12 Q326.62 102.03 339.10 104.89 L339.10 107.76 Q318.30 106.80 297.50 108.72 Z" fill="#aa9c88" stroke="none" stroke-width="1" opacity="0.6"/>
</g></g>
<path d="M298.80 101.20 a1.7 1.7 0 0 1 0.5 -3.3 a2.5 2.5 0 0 1 4.6 -0.3 a1.9 1.9 0 0 1 1.7 3.6 z" fill="#e2c452" stroke="none" stroke-width="1" />
<path d="M302.20 98.30 v1.6 M301.40 99.20 l0.8 0.8 l0.8 -0.8" fill="none" stroke="#3a3420" stroke-width="0.55" />
<path d="M300.40 114.60 v-4.2 l3.0 -0.8 v4.0" fill="none" stroke="#e8e8e8" stroke-width="0.6" fill="none"/>
<circle cx="299.70" cy="114.60" r="0.85" fill="#e8e8e8"/><circle cx="302.70" cy="113.90" r="0.85" fill="#e8e8e8"/>
<text x="298.10" y="124.77" font-size="5.4" fill="#8a8a8e" font-weight="normal" text-anchor="start" font-family="Liberation Sans" textLength="40.40" lengthAdjust="spacingAndGlyphs" stroke="#8a8a8e" stroke-width="0.22">A001_02161034_C...</text>
<rect x="353.70" y="95.00" width="42.80" height="22.50" fill="#0a0a0a" rx="1"/>
<clipPath id="tc5"><rect x="354.30" y="96.30" width="41.60" height="19.10"/></clipPath>
<g clip-path="url(#tc5)"><g filter="url(#tb)">
<rect x="354.30" y="96.30" width="41.60" height="19.10" fill="url(#tg5)" />
<path d="M366.78 108.91 L380.09 105.85 L389.66 101.65 L395.90 99.74 L395.90 109.67 Z" fill="#1a2230" stroke="none" stroke-width="1" />
<ellipse cx="366.78" cy="111.58" rx="8.32" ry="1.53" fill="#7a8aa0" opacity="0.4"/>
</g></g>
<path d="M355.60 101.20 a1.7 1.7 0 0 1 0.5 -3.3 a2.5 2.5 0 0 1 4.6 -0.3 a1.9 1.9 0 0 1 1.7 3.6 z" fill="#e2c452" stroke="none" stroke-width="1" />
<path d="M359.00 98.30 v1.6 M358.20 99.20 l0.8 0.8 l0.8 -0.8" fill="none" stroke="#3a3420" stroke-width="0.55" />
<path d="M357.20 114.60 v-4.2 l3.0 -0.8 v4.0" fill="none" stroke="#e8e8e8" stroke-width="0.6" fill="none"/>
<circle cx="356.50" cy="114.60" r="0.85" fill="#e8e8e8"/><circle cx="359.50" cy="113.90" r="0.85" fill="#e8e8e8"/>
<text x="354.90" y="124.77" font-size="5.4" fill="#8a8a8e" font-weight="normal" text-anchor="start" font-family="Liberation Sans" textLength="40.40" lengthAdjust="spacingAndGlyphs" stroke="#8a8a8e" stroke-width="0.22">B003_02151037_C...</text>
<rect x="126.50" y="131.30" width="42.80" height="22.50" fill="#0a0a0a" rx="1"/>
<clipPath id="tc6"><rect x="127.10" y="132.60" width="41.60" height="19.10"/></clipPath>
<g clip-path="url(#tc6)"><g filter="url(#tb)">
<rect x="127.10" y="132.60" width="41.60" height="19.10" fill="url(#tg6)" />
<ellipse cx="152.06" cy="140.24" rx="10.40" ry="5.73" fill="#b4a494" opacity="0.6"/>
</g></g>
<path d="M128.40 137.50 a1.7 1.7 0 0 1 0.5 -3.3 a2.5 2.5 0 0 1 4.6 -0.3 a1.9 1.9 0 0 1 1.7 3.6 z" fill="#e2c452" stroke="none" stroke-width="1" />
<path d="M131.80 134.60 v1.6 M131.00 135.50 l0.8 0.8 l0.8 -0.8" fill="none" stroke="#3a3420" stroke-width="0.55" />
<path d="M130.00 150.90 v-4.2 l3.0 -0.8 v4.0" fill="none" stroke="#e8e8e8" stroke-width="0.6" fill="none"/>
<circle cx="129.30" cy="150.90" r="0.85" fill="#e8e8e8"/><circle cx="132.30" cy="150.20" r="0.85" fill="#e8e8e8"/>
<text x="127.70" y="161.07" font-size="5.4" fill="#8a8a8e" font-weight="normal" text-anchor="start" font-family="Liberation Sans" textLength="40.40" lengthAdjust="spacingAndGlyphs" stroke="#8a8a8e" stroke-width="0.22">A001_02161038_C...</text>
<rect x="183.30" y="131.30" width="42.80" height="22.50" fill="#0a0a0a" rx="1"/>
<clipPath id="tc7"><rect x="183.90" y="132.60" width="41.60" height="19.10"/></clipPath>
<g clip-path="url(#tc7)"><g filter="url(#tb)">
<rect x="183.90" y="132.60" width="41.60" height="19.10" fill="url(#tg7)" />
<path d="M196.38 145.21 L209.69 142.15 L219.26 137.95 L225.50 136.04 L225.50 145.97 Z" fill="#1a2230" stroke="none" stroke-width="1" />
<ellipse cx="196.38" cy="147.88" rx="8.32" ry="1.53" fill="#7a8aa0" opacity="0.4"/>
</g></g>
<path d="M185.20 137.50 a1.7 1.7 0 0 1 0.5 -3.3 a2.5 2.5 0 0 1 4.6 -0.3 a1.9 1.9 0 0 1 1.7 3.6 z" fill="#e2c452" stroke="none" stroke-width="1" />
<path d="M188.60 134.60 v1.6 M187.80 135.50 l0.8 0.8 l0.8 -0.8" fill="none" stroke="#3a3420" stroke-width="0.55" />
<path d="M186.80 150.90 v-4.2 l3.0 -0.8 v4.0" fill="none" stroke="#e8e8e8" stroke-width="0.6" fill="none"/>
<circle cx="186.10" cy="150.90" r="0.85" fill="#e8e8e8"/><circle cx="189.10" cy="150.20" r="0.85" fill="#e8e8e8"/>
<text x="184.50" y="161.07" font-size="5.4" fill="#8a8a8e" font-weight="normal" text-anchor="start" font-family="Liberation Sans" textLength="40.40" lengthAdjust="spacingAndGlyphs" stroke="#8a8a8e" stroke-width="0.22">B003_02151040_C...</text>
<rect x="240.10" y="131.30" width="42.80" height="22.50" fill="#0a0a0a" rx="1"/>
<clipPath id="tc8"><rect x="240.70" y="132.60" width="41.60" height="19.10"/></clipPath>
<g clip-path="url(#tc8)"><g filter="url(#tb)">
<rect x="240.70" y="132.60" width="41.60" height="19.10" fill="url(#tg8)" />
<ellipse cx="261.50" cy="141.19" rx="8.32" ry="11.46" fill="#9a8260" opacity="1"/>
<ellipse cx="261.50" cy="143.10" rx="4.16" ry="6.49" fill="#d4b4a0" opacity="1"/>
</g></g>
<path d="M242.00 137.50 a1.7 1.7 0 0 1 0.5 -3.3 a2.5 2.5 0 0 1 4.6 -0.3 a1.9 1.9 0 0 1 1.7 3.6 z" fill="#e2c452" stroke="none" stroke-width="1" />
<path d="M245.40 134.60 v1.6 M244.60 135.50 l0.8 0.8 l0.8 -0.8" fill="none" stroke="#3a3420" stroke-width="0.55" />
<path d="M243.60 150.90 v-4.2 l3.0 -0.8 v4.0" fill="none" stroke="#e8e8e8" stroke-width="0.6" fill="none"/>
<circle cx="242.90" cy="150.90" r="0.85" fill="#e8e8e8"/><circle cx="245.90" cy="150.20" r="0.85" fill="#e8e8e8"/>
<text x="241.30" y="161.07" font-size="5.4" fill="#8a8a8e" font-weight="normal" text-anchor="start" font-family="Liberation Sans" textLength="40.40" lengthAdjust="spacingAndGlyphs" stroke="#8a8a8e" stroke-width="0.22">A001_02161040_C...</text>
<rect x="296.90" y="131.30" width="42.80" height="22.50" fill="#0a0a0a" rx="1"/>
<clipPath id="tc9"><rect x="297.50" y="132.60" width="41.60" height="19.10"/></clipPath>
<g clip-path="url(#tc9)"><g filter="url(#tb)">
<rect x="297.50" y="132.60" width="41.60" height="19.10" fill="url(#tg9)" />
<ellipse cx="318.22" cy="140.24" rx="7.49" ry="10.51" fill="#8a6a4a" opacity="1"/>
<ellipse cx="316.22" cy="143.10" rx="4.16" ry="6.49" fill="#d4b4a0" opacity="1"/>
<path d="M318.30 151.70 Q324.54 141.19 330.78 151.70 Z" fill="#b82a2a" stroke="none" stroke-width="1" />
</g></g>
<path d="M298.80 137.50 a1.7 1.7 0 0 1 0.5 -3.3 a2.5 2.5 0 0 1 4.6 -0.3 a1.9 1.9 0 0 1 1.7 3.6 z" fill="#e2c452" stroke="none" stroke-width="1" />
<path d="M302.20 134.60 v1.6 M301.40 135.50 l0.8 0.8 l0.8 -0.8" fill="none" stroke="#3a3420" stroke-width="0.55" />
<path d="M300.40 150.90 v-4.2 l3.0 -0.8 v4.0" fill="none" stroke="#e8e8e8" stroke-width="0.6" fill="none"/>
<circle cx="299.70" cy="150.90" r="0.85" fill="#e8e8e8"/><circle cx="302.70" cy="150.20" r="0.85" fill="#e8e8e8"/>
<text x="298.10" y="161.07" font-size="5.4" fill="#8a8a8e" font-weight="normal" text-anchor="start" font-family="Liberation Sans" textLength="40.40" lengthAdjust="spacingAndGlyphs" stroke="#8a8a8e" stroke-width="0.22">A001_02161042_C...</text>
<rect x="353.70" y="131.30" width="42.80" height="22.50" fill="#0a0a0a" rx="1"/>
<clipPath id="tc10"><rect x="354.30" y="132.60" width="41.60" height="19.10"/></clipPath>
<g clip-path="url(#tc10)"><g filter="url(#tb)">
<rect x="354.30" y="132.60" width="41.60" height="19.10" fill="url(#tg10)" />
<ellipse cx="375.10" cy="141.19" rx="8.32" ry="11.46" fill="#9a8260" opacity="1"/>
<ellipse cx="375.10" cy="143.10" rx="4.16" ry="6.49" fill="#d4b4a0" opacity="1"/>
<path d="M377.18 151.70 Q383.42 141.19 389.66 151.70 Z" fill="#b82a2a" stroke="none" stroke-width="1" />
</g></g>
<path d="M355.60 137.50 a1.7 1.7 0 0 1 0.5 -3.3 a2.5 2.5 0 0 1 4.6 -0.3 a1.9 1.9 0 0 1 1.7 3.6 z" fill="#e2c452" stroke="none" stroke-width="1" />
<path d="M359.00 134.60 v1.6 M358.20 135.50 l0.8 0.8 l0.8 -0.8" fill="none" stroke="#3a3420" stroke-width="0.55" />
<path d="M357.20 150.90 v-4.2 l3.0 -0.8 v4.0" fill="none" stroke="#e8e8e8" stroke-width="0.6" fill="none"/>
<circle cx="356.50" cy="150.90" r="0.85" fill="#e8e8e8"/><circle cx="359.50" cy="150.20" r="0.85" fill="#e8e8e8"/>
<text x="354.90" y="161.07" font-size="5.4" fill="#8a8a8e" font-weight="normal" text-anchor="start" font-family="Liberation Sans" textLength="40.40" lengthAdjust="spacingAndGlyphs" stroke="#8a8a8e" stroke-width="0.22">A001_02161043_C...</text>
<rect x="126.50" y="167.60" width="42.80" height="22.50" fill="#0a0a0a" rx="1"/>
<clipPath id="tc11"><rect x="127.10" y="168.90" width="41.60" height="19.10"/></clipPath>
<g clip-path="url(#tc11)"><g filter="url(#tb)">
<rect x="127.10" y="168.90" width="41.60" height="19.10" fill="url(#tg11)" />
<path d="M139.58 181.51 L152.89 178.45 L162.46 174.25 L168.70 172.34 L168.70 182.27 Z" fill="#1a2230" stroke="none" stroke-width="1" />
<ellipse cx="139.58" cy="184.18" rx="8.32" ry="1.53" fill="#7a8aa0" opacity="0.4"/>
</g></g>
<path d="M128.40 173.80 a1.7 1.7 0 0 1 0.5 -3.3 a2.5 2.5 0 0 1 4.6 -0.3 a1.9 1.9 0 0 1 1.7 3.6 z" fill="#e2c452" stroke="none" stroke-width="1" />
<path d="M131.80 170.90 v1.6 M131.00 171.80 l0.8 0.8 l0.8 -0.8" fill="none" stroke="#3a3420" stroke-width="0.55" />
<path d="M130.00 187.20 v-4.2 l3.0 -0.8 v4.0" fill="none" stroke="#e8e8e8" stroke-width="0.6" fill="none"/>
<circle cx="129.30" cy="187.20" r="0.85" fill="#e8e8e8"/><circle cx="132.30" cy="186.50" r="0.85" fill="#e8e8e8"/>
<text x="127.70" y="197.37" font-size="5.4" fill="#8a8a8e" font-weight="normal" text-anchor="start" font-family="Liberation Sans" textLength="40.40" lengthAdjust="spacingAndGlyphs" stroke="#8a8a8e" stroke-width="0.22">B003_02151044_C...</text>
<rect x="183.30" y="167.60" width="42.80" height="22.50" fill="#0a0a0a" rx="1"/>
<clipPath id="tc12"><rect x="183.90" y="168.90" width="41.60" height="19.10"/></clipPath>
<g clip-path="url(#tc12)"><g filter="url(#tb)">
<rect x="183.90" y="168.90" width="41.60" height="19.10" fill="url(#tg12)" />
<ellipse cx="208.78" cy="176.54" rx="7.49" ry="10.51" fill="#8a6a4a" opacity="1"/>
<ellipse cx="206.78" cy="179.40" rx="4.16" ry="6.49" fill="#d4b4a0" opacity="1"/>
<path d="M208.86 188.00 Q215.10 177.49 221.34 188.00 Z" fill="#b82a2a" stroke="none" stroke-width="1" />
</g></g>
<path d="M185.20 173.80 a1.7 1.7 0 0 1 0.5 -3.3 a2.5 2.5 0 0 1 4.6 -0.3 a1.9 1.9 0 0 1 1.7 3.6 z" fill="#e2c452" stroke="none" stroke-width="1" />
<path d="M188.60 170.90 v1.6 M187.80 171.80 l0.8 0.8 l0.8 -0.8" fill="none" stroke="#3a3420" stroke-width="0.55" />
<path d="M186.80 187.20 v-4.2 l3.0 -0.8 v4.0" fill="none" stroke="#e8e8e8" stroke-width="0.6" fill="none"/>
<circle cx="186.10" cy="187.20" r="0.85" fill="#e8e8e8"/><circle cx="189.10" cy="186.50" r="0.85" fill="#e8e8e8"/>
<text x="184.50" y="197.37" font-size="5.4" fill="#8a8a8e" font-weight="normal" text-anchor="start" font-family="Liberation Sans" textLength="40.40" lengthAdjust="spacingAndGlyphs" stroke="#8a8a8e" stroke-width="0.22">A001_02161046_C...</text>
<rect x="240.10" y="167.60" width="42.80" height="22.50" fill="#0a0a0a" rx="1"/>
<clipPath id="tc13"><rect x="240.70" y="168.90" width="41.60" height="19.10"/></clipPath>
<g clip-path="url(#tc13)"><g filter="url(#tb)">
<rect x="240.70" y="168.90" width="41.60" height="19.10" fill="url(#tg13)" />
</g></g>
<path d="M242.00 173.80 a1.7 1.7 0 0 1 0.5 -3.3 a2.5 2.5 0 0 1 4.6 -0.3 a1.9 1.9 0 0 1 1.7 3.6 z" fill="#e2c452" stroke="none" stroke-width="1" />
<path d="M245.40 170.90 v1.6 M244.60 171.80 l0.8 0.8 l0.8 -0.8" fill="none" stroke="#3a3420" stroke-width="0.55" />
<path d="M243.60 187.20 v-4.2 l3.0 -0.8 v4.0" fill="none" stroke="#e8e8e8" stroke-width="0.6" fill="none"/>
<circle cx="242.90" cy="187.20" r="0.85" fill="#e8e8e8"/><circle cx="245.90" cy="186.50" r="0.85" fill="#e8e8e8"/>
<text x="241.30" y="197.37" font-size="5.4" fill="#8a8a8e" font-weight="normal" text-anchor="start" font-family="Liberation Sans" textLength="40.40" lengthAdjust="spacingAndGlyphs" stroke="#8a8a8e" stroke-width="0.22">A001_02161048_C...</text>
<rect x="296.90" y="167.60" width="42.80" height="22.50" fill="#0a0a0a" rx="1"/>
<clipPath id="tc14"><rect x="297.50" y="168.90" width="41.60" height="19.10"/></clipPath>
<g clip-path="url(#tc14)"><g filter="url(#tb)">
<rect x="297.50" y="168.90" width="41.60" height="19.10" fill="url(#tg14)" />
<path d="M309.98 181.51 L323.29 178.45 L332.86 174.25 L339.10 172.34 L339.10 182.27 Z" fill="#1a2230" stroke="none" stroke-width="1" />
<ellipse cx="309.98" cy="184.18" rx="8.32" ry="1.53" fill="#7a8aa0" opacity="0.4"/>
</g></g>
<path d="M298.80 173.80 a1.7 1.7 0 0 1 0.5 -3.3 a2.5 2.5 0 0 1 4.6 -0.3 a1.9 1.9 0 0 1 1.7 3.6 z" fill="#e2c452" stroke="none" stroke-width="1" />
<path d="M302.20 170.90 v1.6 M301.40 171.80 l0.8 0.8 l0.8 -0.8" fill="none" stroke="#3a3420" stroke-width="0.55" />
<path d="M300.40 187.20 v-4.2 l3.0 -0.8 v4.0" fill="none" stroke="#e8e8e8" stroke-width="0.6" fill="none"/>
<circle cx="299.70" cy="187.20" r="0.85" fill="#e8e8e8"/><circle cx="302.70" cy="186.50" r="0.85" fill="#e8e8e8"/>
<text x="298.10" y="197.37" font-size="5.4" fill="#8a8a8e" font-weight="normal" text-anchor="start" font-family="Liberation Sans" textLength="40.40" lengthAdjust="spacingAndGlyphs" stroke="#8a8a8e" stroke-width="0.22">B003_02151050_C...</text>
<rect x="353.70" y="167.60" width="42.80" height="22.50" fill="#0a0a0a" rx="1"/>
<clipPath id="tc15"><rect x="354.30" y="168.90" width="41.60" height="19.10"/></clipPath>
<g clip-path="url(#tc15)"><g filter="url(#tb)">
<rect x="354.30" y="168.90" width="41.60" height="19.10" fill="url(#tg15)" />
<path d="M354.30 185.13 L377.18 178.45 L383.42 178.45 L358.46 188.00 Z" fill="#b0b4b4" stroke="none" stroke-width="1" opacity="0.7"/>
</g></g>
<path d="M355.60 173.80 a1.7 1.7 0 0 1 0.5 -3.3 a2.5 2.5 0 0 1 4.6 -0.3 a1.9 1.9 0 0 1 1.7 3.6 z" fill="#e2c452" stroke="none" stroke-width="1" />
<path d="M359.00 170.90 v1.6 M358.20 171.80 l0.8 0.8 l0.8 -0.8" fill="none" stroke="#3a3420" stroke-width="0.55" />
<path d="M357.20 187.20 v-4.2 l3.0 -0.8 v4.0" fill="none" stroke="#e8e8e8" stroke-width="0.6" fill="none"/>
<circle cx="356.50" cy="187.20" r="0.85" fill="#e8e8e8"/><circle cx="359.50" cy="186.50" r="0.85" fill="#e8e8e8"/>
<text x="354.90" y="197.37" font-size="5.4" fill="#8a8a8e" font-weight="normal" text-anchor="start" font-family="Liberation Sans" textLength="40.40" lengthAdjust="spacingAndGlyphs" stroke="#8a8a8e" stroke-width="0.22">A001_02161052_C...</text>
<rect x="126.50" y="203.90" width="42.80" height="22.50" fill="#0a0a0a" rx="1"/>
<clipPath id="tc16"><rect x="127.10" y="205.20" width="41.60" height="19.10"/></clipPath>
<g clip-path="url(#tc16)"><g filter="url(#tb)">
<rect x="127.10" y="205.20" width="41.60" height="19.10" fill="url(#tg16)" />
</g></g>
<path d="M128.40 210.10 a1.7 1.7 0 0 1 0.5 -3.3 a2.5 2.5 0 0 1 4.6 -0.3 a1.9 1.9 0 0 1 1.7 3.6 z" fill="#e2c452" stroke="none" stroke-width="1" />
<path d="M131.80 207.20 v1.6 M131.00 208.10 l0.8 0.8 l0.8 -0.8" fill="none" stroke="#3a3420" stroke-width="0.55" />
<path d="M130.00 223.50 v-4.2 l3.0 -0.8 v4.0" fill="none" stroke="#e8e8e8" stroke-width="0.6" fill="none"/>
<circle cx="129.30" cy="223.50" r="0.85" fill="#e8e8e8"/><circle cx="132.30" cy="222.80" r="0.85" fill="#e8e8e8"/>
<text x="127.70" y="233.67" font-size="5.4" fill="#8a8a8e" font-weight="normal" text-anchor="start" font-family="Liberation Sans" textLength="40.40" lengthAdjust="spacingAndGlyphs" stroke="#8a8a8e" stroke-width="0.22">A001_02161243_C...</text>
<rect x="183.30" y="203.90" width="42.80" height="22.50" fill="#0a0a0a" rx="1"/>
<clipPath id="tc17"><rect x="183.90" y="205.20" width="41.60" height="19.10"/></clipPath>
<g clip-path="url(#tc17)"><g filter="url(#tb)">
<rect x="183.90" y="205.20" width="41.60" height="19.10" fill="#4a4644" />
<rect x="183.90" y="205.20" width="41.60" height="4.20" fill="#9aa0a4" />
<rect x="183.90" y="208.64" width="41.60" height="5.73" fill="#8a2a2a" />
<rect x="183.90" y="214.37" width="41.60" height="9.93" fill="#3a3430" />
<line x1="209.69" y1="205.20" x2="209.69" y2="224.30" stroke="#c8c8c8" stroke-width="0.4" />
</g></g>
<path d="M185.20 210.10 a1.7 1.7 0 0 1 0.5 -3.3 a2.5 2.5 0 0 1 4.6 -0.3 a1.9 1.9 0 0 1 1.7 3.6 z" fill="#e2c452" stroke="none" stroke-width="1" />
<path d="M188.60 207.20 v1.6 M187.80 208.10 l0.8 0.8 l0.8 -0.8" fill="none" stroke="#3a3420" stroke-width="0.55" />
<path d="M186.80 223.50 v-4.2 l3.0 -0.8 v4.0" fill="none" stroke="#e8e8e8" stroke-width="0.6" fill="none"/>
<circle cx="186.10" cy="223.50" r="0.85" fill="#e8e8e8"/><circle cx="189.10" cy="222.80" r="0.85" fill="#e8e8e8"/>
<text x="184.50" y="233.67" font-size="5.4" fill="#8a8a8e" font-weight="normal" text-anchor="start" font-family="Liberation Sans" textLength="40.40" lengthAdjust="spacingAndGlyphs" stroke="#8a8a8e" stroke-width="0.22">A001_02161255_C...</text>
<rect x="240.10" y="203.90" width="42.80" height="22.50" fill="#0a0a0a" rx="1"/>
<clipPath id="tc18"><rect x="240.70" y="205.20" width="41.60" height="19.10"/></clipPath>
<g clip-path="url(#tc18)"><g filter="url(#tb)">
<rect x="240.70" y="205.20" width="41.60" height="19.10" fill="url(#tg17)" />
<path d="M259.42 215.13 L251.10 224.30 L271.90 224.30 L263.58 215.13 Z" fill="#a89278" stroke="none" stroke-width="1" />
</g></g>
<path d="M242.00 210.10 a1.7 1.7 0 0 1 0.5 -3.3 a2.5 2.5 0 0 1 4.6 -0.3 a1.9 1.9 0 0 1 1.7 3.6 z" fill="#e2c452" stroke="none" stroke-width="1" />
<path d="M245.40 207.20 v1.6 M244.60 208.10 l0.8 0.8 l0.8 -0.8" fill="none" stroke="#3a3420" stroke-width="0.55" />
<path d="M243.60 223.50 v-4.2 l3.0 -0.8 v4.0" fill="none" stroke="#e8e8e8" stroke-width="0.6" fill="none"/>
<circle cx="242.90" cy="223.50" r="0.85" fill="#e8e8e8"/><circle cx="245.90" cy="222.80" r="0.85" fill="#e8e8e8"/>
<text x="241.30" y="233.67" font-size="5.4" fill="#8a8a8e" font-weight="normal" text-anchor="start" font-family="Liberation Sans" textLength="40.40" lengthAdjust="spacingAndGlyphs" stroke="#8a8a8e" stroke-width="0.22">A001_02161257_C...</text>
<rect x="296.90" y="203.90" width="42.80" height="22.50" fill="#0a0a0a" rx="1"/>
<clipPath id="tc19"><rect x="297.50" y="205.20" width="41.60" height="19.10"/></clipPath>
<g clip-path="url(#tc19)"><g filter="url(#tb)">
<rect x="297.50" y="205.20" width="41.60" height="19.10" fill="#4a4644" />
<rect x="297.50" y="205.20" width="41.60" height="4.20" fill="#9aa0a4" />
<rect x="297.50" y="208.64" width="41.60" height="5.73" fill="#8a2a2a" />
<rect x="297.50" y="214.37" width="41.60" height="9.93" fill="#3a3430" />
<rect x="305.82" y="213.99" width="33.28" height="1.72" fill="#e02a50" />
<line x1="323.29" y1="205.20" x2="323.29" y2="224.30" stroke="#c8c8c8" stroke-width="0.4" />
</g></g>
<path d="M298.80 210.10 a1.7 1.7 0 0 1 0.5 -3.3 a2.5 2.5 0 0 1 4.6 -0.3 a1.9 1.9 0 0 1 1.7 3.6 z" fill="#e2c452" stroke="none" stroke-width="1" />
<path d="M302.20 207.20 v1.6 M301.40 208.10 l0.8 0.8 l0.8 -0.8" fill="none" stroke="#3a3420" stroke-width="0.55" />
<path d="M300.40 223.50 v-4.2 l3.0 -0.8 v4.0" fill="none" stroke="#e8e8e8" stroke-width="0.6" fill="none"/>
<circle cx="299.70" cy="223.50" r="0.85" fill="#e8e8e8"/><circle cx="302.70" cy="222.80" r="0.85" fill="#e8e8e8"/>
<text x="298.10" y="233.67" font-size="5.4" fill="#8a8a8e" font-weight="normal" text-anchor="start" font-family="Liberation Sans" textLength="40.40" lengthAdjust="spacingAndGlyphs" stroke="#8a8a8e" stroke-width="0.22">A001_02161302_C...</text>
<rect x="353.70" y="203.90" width="42.80" height="22.50" fill="#0a0a0a" rx="1"/>
<clipPath id="tc20"><rect x="354.30" y="205.20" width="41.60" height="19.10"/></clipPath>
<g clip-path="url(#tc20)"><g filter="url(#tb)">
<rect x="354.30" y="205.20" width="41.60" height="19.10" fill="url(#tg18)" />
<path d="M360.54 217.04 Q375.10 206.16 389.66 217.04 Z" fill="#3e4238" stroke="none" stroke-width="1" />
<rect x="354.30" y="217.04" width="41.60" height="7.26" fill="#7a6a52" />
</g></g>
<path d="M355.60 210.10 a1.7 1.7 0 0 1 0.5 -3.3 a2.5 2.5 0 0 1 4.6 -0.3 a1.9 1.9 0 0 1 1.7 3.6 z" fill="#e2c452" stroke="none" stroke-width="1" />
<path d="M359.00 207.20 v1.6 M358.20 208.10 l0.8 0.8 l0.8 -0.8" fill="none" stroke="#3a3420" stroke-width="0.55" />
<path d="M357.20 223.50 v-4.2 l3.0 -0.8 v4.0" fill="none" stroke="#e8e8e8" stroke-width="0.6" fill="none"/>
<circle cx="356.50" cy="223.50" r="0.85" fill="#e8e8e8"/><circle cx="359.50" cy="222.80" r="0.85" fill="#e8e8e8"/>
<text x="354.90" y="233.67" font-size="5.4" fill="#8a8a8e" font-weight="normal" text-anchor="start" font-family="Liberation Sans" textLength="40.40" lengthAdjust="spacingAndGlyphs" stroke="#8a8a8e" stroke-width="0.22">A001_02161308_C...</text>
<rect x="126.50" y="240.30" width="42.80" height="22.50" fill="#0a0a0a" rx="1"/>
<clipPath id="tc21"><rect x="127.10" y="241.60" width="41.60" height="19.10"/></clipPath>
<g clip-path="url(#tc21)"><g filter="url(#tb)">
<rect x="127.10" y="241.60" width="41.60" height="19.10" fill="url(#tg19)" />
</g></g>
<path d="M128.40 246.50 a1.7 1.7 0 0 1 0.5 -3.3 a2.5 2.5 0 0 1 4.6 -0.3 a1.9 1.9 0 0 1 1.7 3.6 z" fill="#e2c452" stroke="none" stroke-width="1" />
<path d="M131.80 243.60 v1.6 M131.00 244.50 l0.8 0.8 l0.8 -0.8" fill="none" stroke="#3a3420" stroke-width="0.55" />
<path d="M130.00 259.90 v-4.2 l3.0 -0.8 v4.0" fill="none" stroke="#e8e8e8" stroke-width="0.6" fill="none"/>
<circle cx="129.30" cy="259.90" r="0.85" fill="#e8e8e8"/><circle cx="132.30" cy="259.20" r="0.85" fill="#e8e8e8"/>
<rect x="183.30" y="240.30" width="42.80" height="22.50" fill="#0a0a0a" rx="1"/>
<clipPath id="tc22"><rect x="183.90" y="241.60" width="41.60" height="19.10"/></clipPath>
<g clip-path="url(#tc22)"><g filter="url(#tb)">
<rect x="183.90" y="241.60" width="41.60" height="19.10" fill="url(#tg20)" />
<path d="M192.22 252.10 Q202.62 249.24 213.02 252.10 Z" fill="#6a6a60" stroke="none" stroke-width="1" />
</g></g>
<path d="M185.20 246.50 a1.7 1.7 0 0 1 0.5 -3.3 a2.5 2.5 0 0 1 4.6 -0.3 a1.9 1.9 0 0 1 1.7 3.6 z" fill="#e2c452" stroke="none" stroke-width="1" />
<path d="M188.60 243.60 v1.6 M187.80 244.50 l0.8 0.8 l0.8 -0.8" fill="none" stroke="#3a3420" stroke-width="0.55" />
<path d="M186.80 259.90 v-4.2 l3.0 -0.8 v4.0" fill="none" stroke="#e8e8e8" stroke-width="0.6" fill="none"/>
<circle cx="186.10" cy="259.90" r="0.85" fill="#e8e8e8"/><circle cx="189.10" cy="259.20" r="0.85" fill="#e8e8e8"/>
<rect x="240.10" y="240.30" width="42.80" height="22.50" fill="#0a0a0a" rx="1"/>
<clipPath id="tc23"><rect x="240.70" y="241.60" width="41.60" height="19.10"/></clipPath>
<g clip-path="url(#tc23)"><g filter="url(#tb)">
<rect x="240.70" y="241.60" width="41.60" height="19.10" fill="#2e2c2a" />
<path d="M242.78 243.89 L280.22 242.56 L282.30 252.10 L240.70 253.44 Z" fill="#a4aaac" stroke="none" stroke-width="1" />
<rect x="240.70" y="249.62" width="41.60" height="3.06" fill="#8a8270" />
<rect x="240.70" y="253.06" width="41.60" height="7.64" fill="#2a2624" />
<ellipse cx="257.34" cy="255.92" rx="8.32" ry="2.29" fill="#4a4440" opacity="0.8"/>
<ellipse cx="249.02" cy="258.41" rx="3.33" ry="2.67" fill="#b02a2a" opacity="1"/>
<line x1="264.83" y1="241.60" x2="264.83" y2="253.06" stroke="#242220" stroke-width="1.2" />
<line x1="273.98" y1="241.60" x2="273.98" y2="260.70" stroke="#c8c8c8" stroke-width="0.4" />
</g></g>
<path d="M242.00 246.50 a1.7 1.7 0 0 1 0.5 -3.3 a2.5 2.5 0 0 1 4.6 -0.3 a1.9 1.9 0 0 1 1.7 3.6 z" fill="#e2c452" stroke="none" stroke-width="1" />
<path d="M245.40 243.60 v1.6 M244.60 244.50 l0.8 0.8 l0.8 -0.8" fill="none" stroke="#3a3420" stroke-width="0.55" />
<path d="M243.60 259.90 v-4.2 l3.0 -0.8 v4.0" fill="none" stroke="#e8e8e8" stroke-width="0.6" fill="none"/>
<circle cx="242.90" cy="259.90" r="0.85" fill="#e8e8e8"/><circle cx="245.90" cy="259.20" r="0.85" fill="#e8e8e8"/>
<rect x="296.90" y="240.30" width="42.80" height="22.50" fill="#0a0a0a" rx="1"/>
<clipPath id="tc24"><rect x="297.50" y="241.60" width="41.60" height="19.10"/></clipPath>
<g clip-path="url(#tc24)"><g filter="url(#tb)">
<rect x="297.50" y="241.60" width="41.60" height="19.10" fill="#2e2c2a" />
<path d="M299.58 243.89 L337.02 242.56 L339.10 252.10 L297.50 253.44 Z" fill="#a4aaac" stroke="none" stroke-width="1" />
<rect x="297.50" y="249.62" width="41.60" height="3.06" fill="#8a8270" />
<rect x="297.50" y="253.06" width="41.60" height="7.64" fill="#2a2624" />
<ellipse cx="314.14" cy="255.92" rx="8.32" ry="2.29" fill="#4a4440" opacity="0.8"/>
<line x1="321.63" y1="241.60" x2="321.63" y2="253.06" stroke="#242220" stroke-width="1.2" />
<line x1="330.78" y1="241.60" x2="330.78" y2="260.70" stroke="#c8c8c8" stroke-width="0.4" />
</g></g>
<path d="M298.80 246.50 a1.7 1.7 0 0 1 0.5 -3.3 a2.5 2.5 0 0 1 4.6 -0.3 a1.9 1.9 0 0 1 1.7 3.6 z" fill="#e2c452" stroke="none" stroke-width="1" />
<path d="M302.20 243.60 v1.6 M301.40 244.50 l0.8 0.8 l0.8 -0.8" fill="none" stroke="#3a3420" stroke-width="0.55" />
<path d="M300.40 259.90 v-4.2 l3.0 -0.8 v4.0" fill="none" stroke="#e8e8e8" stroke-width="0.6" fill="none"/>
<circle cx="299.70" cy="259.90" r="0.85" fill="#e8e8e8"/><circle cx="302.70" cy="259.20" r="0.85" fill="#e8e8e8"/>
<rect x="353.70" y="240.30" width="42.80" height="22.50" fill="#0a0a0a" rx="1"/>
<clipPath id="tc25"><rect x="354.30" y="241.60" width="41.60" height="19.10"/></clipPath>
<g clip-path="url(#tc25)"><g filter="url(#tb)">
<rect x="354.30" y="241.60" width="41.60" height="19.10" fill="#2e2c2a" />
<path d="M356.38 243.89 L393.82 242.56 L395.90 252.10 L354.30 253.44 Z" fill="#a4aaac" stroke="none" stroke-width="1" />
<rect x="354.30" y="249.62" width="41.60" height="3.06" fill="#8a8270" />
<rect x="354.30" y="253.06" width="41.60" height="7.64" fill="#2a2624" />
<ellipse cx="370.94" cy="255.92" rx="8.32" ry="2.29" fill="#4a4440" opacity="0.8"/>
<ellipse cx="362.62" cy="258.41" rx="3.33" ry="2.67" fill="#b02a2a" opacity="1"/>
<line x1="378.43" y1="241.60" x2="378.43" y2="253.06" stroke="#242220" stroke-width="1.2" />
<line x1="387.58" y1="241.60" x2="387.58" y2="260.70" stroke="#c8c8c8" stroke-width="0.4" />
</g></g>
<path d="M355.60 246.50 a1.7 1.7 0 0 1 0.5 -3.3 a2.5 2.5 0 0 1 4.6 -0.3 a1.9 1.9 0 0 1 1.7 3.6 z" fill="#e2c452" stroke="none" stroke-width="1" />
<path d="M359.00 243.60 v1.6 M358.20 244.50 l0.8 0.8 l0.8 -0.8" fill="none" stroke="#3a3420" stroke-width="0.55" />
<path d="M357.20 259.90 v-4.2 l3.0 -0.8 v4.0" fill="none" stroke="#e8e8e8" stroke-width="0.6" fill="none"/>
<circle cx="356.50" cy="259.90" r="0.85" fill="#e8e8e8"/><circle cx="359.50" cy="259.20" r="0.85" fill="#e8e8e8"/>
<rect x="113.00" y="264.00" width="301.00" height="19.00" fill="#222226" />
<rect x="113.00" y="263.60" width="301.00" height="0.80" fill="#1a1a1d" />
<path d="M123.5 270.5 h6 v5 h-6z M126.5 270.5 v-2.5 l1.5 -1" fill="none" stroke="#6a6a6e" stroke-width="0.6" />
<path d="M141 276 v-4.5 l3.5 -0.8 v4 M144.5 268 v-2" fill="none" stroke="#6a6a6e" stroke-width="0.6" />
<path d="M216.50 269.5 h6 v4.2 h-6z M219.50 273.7 v2.3 M218.00 276 h3" fill="none" stroke="#6a6a6e" stroke-width="0.6" />
<path d="M234.50 269.5 h6 v4.2 h-6z M237.50 273.7 v2.3 M236.00 276 h3" fill="none" stroke="#6a6a6e" stroke-width="0.6" />
<path d="M249.50 269.5 h6 v4.2 h-6z M252.50 273.7 v2.3 M251.00 276 h3" fill="none" stroke="#6a6a6e" stroke-width="0.6" />
<path d="M267.50 269.5 h6 v4.2 h-6z M270.50 273.7 v2.3 M269.00 276 h3" fill="none" stroke="#6a6a6e" stroke-width="0.6" />
<path d="M284.00 269.5 h6 v4.2 h-6z M287.00 273.7 v2.3 M285.50 276 h3" fill="none" stroke="#6a6a6e" stroke-width="0.6" />
<path d="M299.00 269.5 h6 v4.2 h-6z M302.00 273.7 v2.3 M300.50 276 h3" fill="none" stroke="#6a6a6e" stroke-width="0.6" />
<rect x="364.50" y="269.50" width="7.00" height="6.50" fill="#333338" />
<path d="M381.5 269.5 h6.5 v6 h-6.5z M382.5 274 l2 -2 l1.5 1.5 l1.5 -1.2" fill="none" stroke="#6a6a6e" stroke-width="0.6" />
<path d="M399 270 h2.5 v2.5 h-2.5z M403 270 h2.5 v2.5 h-2.5z M399 273.5 h2.5 v2.5 h-2.5z M403 273.5 h2.5 v2.5 h-2.5z" fill="none" stroke="#6a6a6e" stroke-width="0.5" />
<rect x="413.60" y="83.00" width="0.80" height="200.00" fill="#111113" />
<g clip-path="url(#vclip)">
<rect x="477.00" y="83.00" width="320.80" height="180.80" fill="url(#sky)" />
<ellipse cx="740" cy="160" rx="110" ry="40" fill="url(#glow)"/>
<ellipse cx="708" cy="95.5" rx="11" ry="3.5" fill="#4e8a9e" opacity="0.4" filter="url(#bl2)"/>
<ellipse cx="738" cy="91.5" rx="9" ry="3.5" fill="#4e8a9e" opacity="0.35" filter="url(#bl2)"/>
<ellipse cx="580" cy="96" rx="30" ry="6" fill="#5a98aa" opacity="0.3" filter="url(#bl3)"/>
<g filter="url(#bl1)">
<path d="M558 174 L566 162 L578 157 L590 155 L602 158 L612 153 L626 156 L640 160 L656 159 L672 154 L686 151 L700 155 L712 158 L728 160 L742 156 L756 153 L772 156 L786 152 L798 150 L798 178 L558 178 Z" fill="#d2dcde" stroke="none" stroke-width="1" opacity="0.9"/>
<path d="M562 174 L574 167 L586 162 L598 167 L612 162 L628 167 L646 164 L662 169 L680 162 L696 166 L716 169 L735 164 L752 167 L770 165 L786 169 L798 166 L798 178 L562 178 Z" fill="#a2b4ba" stroke="none" stroke-width="1" />
<path d="M600 175 L620 171 L660 173 L700 170 L740 173 L798 171 L798 178 L600 178 Z" fill="#b4c4c8" stroke="none" stroke-width="1" />
</g>
<g filter="url(#bl1)">
<path d="M477 143 L530 142.3 L562.5 142.6 L565 150 L569.5 168.5 L572 173 L477 173 Z" fill="url(#mesa)" stroke="none" stroke-width="1" />
<line x1="486.00" y1="143.50" x2="486.80" y2="169.00" stroke="#4e6a6c" stroke-width="1.3" opacity="0.35"/>
<line x1="497.00" y1="143.50" x2="497.80" y2="169.00" stroke="#4e6a6c" stroke-width="1.3" opacity="0.4"/>
<line x1="506.00" y1="143.50" x2="506.80" y2="169.00" stroke="#4e6a6c" stroke-width="1.3" opacity="0.3"/>
<line x1="515.00" y1="143.50" x2="515.80" y2="169.00" stroke="#4e6a6c" stroke-width="1.3" opacity="0.45"/>
<line x1="527.00" y1="143.50" x2="527.80" y2="169.00" stroke="#4e6a6c" stroke-width="1.3" opacity="0.35"/>
<line x1="538.00" y1="143.50" x2="538.80" y2="169.00" stroke="#4e6a6c" stroke-width="1.3" opacity="0.4"/>
<line x1="549.00" y1="143.50" x2="549.80" y2="169.00" stroke="#4e6a6c" stroke-width="1.3" opacity="0.35"/>
<line x1="557.00" y1="143.50" x2="557.80" y2="169.00" stroke="#4e6a6c" stroke-width="1.3" opacity="0.4"/>
</g>
<path d="M477 169.5 L540 169 L580 171.5 L640 173.5 L700 173.5 L798 173 L798 264 L477 264 Z" fill="url(#gnd)" stroke="none" stroke-width="1" />
<path d="M477 169.5 L540 169 L580 171.5 L640 173.5 L700 173.5 L798 173 L798 264 L477 264 Z" fill="#fff" stroke="none" stroke-width="1" filter="url(#red)" opacity="0.7"/>
<g mask="url(#mmask)">
<path d="M477 169.5 L540 169 L580 171.5 L640 173.5 L700 173.5 L798 173 L798 264 L477 264 Z" fill="#fff" stroke="none" stroke-width="1" filter="url(#moss2)" opacity="0.6"/>
<path d="M477 169.5 L540 169 L580 171.5 L640 173.5 L700 173.5 L798 173 L798 264 L477 264 Z" fill="#fff" stroke="none" stroke-width="1" filter="url(#moss)" opacity="0.95"/>
</g>
<g filter="url(#bl2)">
<path d="M477 206 Q495 202 515 205 Q540 200 565 199 Q590 195 612 198 Q615 206 600 211 Q570 213 545 211 Q515 216 477 215 Z" fill="#2a2216" stroke="none" stroke-width="1" opacity="0.8"/>
<path d="M735 211 Q760 205 795 208 L798 224 Q770 224 740 221 Q728 218 735 211 Z" fill="#2a2218" stroke="none" stroke-width="1" opacity="0.7"/>
<path d="M640 188 Q660 186 680 191 Q670 196 650 196 Z" fill="#2a2218" stroke="none" stroke-width="1" opacity="0.5"/>
</g>
<path d="M612 207 L636 207 L700 264 L560 264 Z" fill="#c0985a" opacity="0.35" filter="url(#bl3)"/>
<g filter="url(#bl2)" opacity="0.75">
<path d="M603 208 L606 208 L603 225 L599 240 L594 264 L584 264 L590 244 L598 225 Z" fill="#2a1e12" stroke="none" stroke-width="1" />
<path d="M643 208 L647 208 L655 225 L664 242 L678 264 L668 264 L656 244 L648 226 Z" fill="#2a1e12" stroke="none" stroke-width="1" />
</g>
<g>
</g>
<g filter="url(#bl1)">
<ellipse cx="623" cy="207.5" rx="27" ry="4" fill="#2a2014" opacity="0.6"/>
<path d="M612 169 Q612.5 160.3 623.5 160.3 Q634.5 160.3 635 169 Z" fill="#6a7880" stroke="none" stroke-width="1" />
<path d="M613.5 167 Q614.5 160.8 623.5 160.8 Q632.5 160.8 633.5 167 Z" fill="#aab8c0" stroke="none" stroke-width="1" />
<rect x="606.00" y="168.40" width="35.00" height="2.00" fill="#1e1c1e" />
<path d="M604 183.5 L607 171 L640 171 L643 183.5 L645.5 192 L645.5 205 L601.5 205 L601.5 192 Z" fill="#8e1a26" stroke="none" stroke-width="1" />
<path d="M608 172.3 L639 172.3 L641 182.8 L606 182.8 Z" fill="#2a2224" stroke="none" stroke-width="1" />
<rect x="612.00" y="176.00" width="6.00" height="6.80" fill="#4a3c38" />
<rect x="628.00" y="176.00" width="6.00" height="6.80" fill="#5a4a40" />
<path d="M599.5 180 h4 v4 h-4z M643.5 180 h4 v4 h-4z" fill="#7e1620" stroke="none" stroke-width="1" />
<path d="M604.5 186.5 L612 187.5 L612 190 L605 189.5 Z M642.5 186.5 L635 187.5 L635 190 L642 189.5 Z" fill="#e8e4e0" stroke="none" stroke-width="1" />
<rect x="612.00" y="186.50" width="23.00" height="6.50" fill="#2a1618" />
<rect x="602.00" y="199.00" width="43.00" height="6.00" fill="#6a1420" />
<rect x="615.80" y="196.30" width="13.20" height="3.00" fill="#e4e4e4" />
<rect x="601.50" y="201.00" width="6.00" height="8.50" fill="#1a1816" />
<rect x="639.50" y="201.00" width="6.00" height="8.50" fill="#1a1816" />
</g>
</g>
<rect x="860.00" y="83.00" width="0.60" height="181.00" fill="#141416" />
<rect x="872.50" y="84.00" width="10.50" height="176.00" fill="#18181b" />
<rect x="874.00" y="117.20" width="3.50" height="8.10" fill="#e03020" />
<rect x="878.00" y="117.20" width="3.50" height="8.10" fill="#e03020" />
<rect x="874.00" y="125.30" width="3.50" height="38.30" fill="#e8e040" />
<rect x="878.00" y="125.30" width="3.50" height="38.30" fill="#e8e040" />
<rect x="874.00" y="163.60" width="3.50" height="94.90" fill="#30c020" />
<rect x="878.00" y="163.60" width="3.50" height="94.90" fill="#30c020" />
<rect x="873.00" y="85.00" width="9.00" height="1.00" fill="#c03030" />
<text x="868.00" y="86.34" font-size="3.4" fill="#6a6a6e" font-weight="normal" text-anchor="middle" font-family="Liberation Sans" stroke="#6a6a6e" stroke-width="0.1">0</text>
<text x="868.00" y="107.54" font-size="3.4" fill="#6a6a6e" font-weight="normal" text-anchor="middle" font-family="Liberation Sans" stroke="#6a6a6e" stroke-width="0.1">-5</text>
<text x="868.00" y="129.44" font-size="3.4" fill="#6a6a6e" font-weight="normal" text-anchor="middle" font-family="Liberation Sans" stroke="#6a6a6e" stroke-width="0.1">-10</text>
<text x="868.00" y="151.24" font-size="3.4" fill="#6a6a6e" font-weight="normal" text-anchor="middle" font-family="Liberation Sans" stroke="#6a6a6e" stroke-width="0.1">-15</text>
<text x="868.00" y="172.94" font-size="3.4" fill="#6a6a6e" font-weight="normal" text-anchor="middle" font-family="Liberation Sans" stroke="#6a6a6e" stroke-width="0.1">-20</text>
<text x="868.00" y="207.44" font-size="3.4" fill="#6a6a6e" font-weight="normal" text-anchor="middle" font-family="Liberation Sans" stroke="#6a6a6e" stroke-width="0.1">-30</text>
<text x="868.00" y="233.64" font-size="3.4" fill="#6a6a6e" font-weight="normal" text-anchor="middle" font-family="Liberation Sans" stroke="#6a6a6e" stroke-width="0.1">-40</text>
<text x="868.00" y="246.64" font-size="3.4" fill="#6a6a6e" font-weight="normal" text-anchor="middle" font-family="Liberation Sans" stroke="#6a6a6e" stroke-width="0.1">-50</text>
<path d="M420.5 270 h11 M420.5 273.5 h11 M420.5 277 h11" fill="none" stroke="#6a6a6e" stroke-width="0.6" />
<path d="M424 269 v2 M428 272.5 v2 M425 276 v2" fill="none" stroke="#6a6a6e" stroke-width="1" />
<path d="M442.5 269.5 q1.6 0 1.6 1.6 v3.5 q0 1.6 -1.6 1.6 q-1.6 0 -1.6 -1.6 v-3.5 q0 -1.6 1.6 -1.6z M444.5 278 v-2" fill="#5a5a5e" stroke="none" stroke-width="1" />
<path d="M458.5 270.5 h9.5 v6.5 h-9.5z M461 270.5 v6.5 M465.5 270.5 v6.5" fill="none" stroke="#6a6a6e" stroke-width="0.6" />
<path d="M477 270.5 h8 v5 h-8z M481 275.5 l2.5 2.5" fill="none" stroke="#6a6a6e" stroke-width="0.6" />
<path d="M495.5 269.5 h7 v2.5 M496 272.5 v-3" fill="none" stroke="#6a6a6e" stroke-width="0.6" />
<path d="M499.5 271.5 l6.5 3.2 l-6.5 3.2 z" fill="#c8c8c8" stroke="none" stroke-width="1" />
<path d="M538.8 271.3 l-1.9 2.3 l1.9 2.3 M552.3 271.3 l1.9 2.3 l-1.9 2.3" fill="none" stroke="#a8a8ac" stroke-width="0.8" />
<circle cx="545.2" cy="273.6" r="1.9" fill="#d8d8d8"/>
<path d="M582.5 270 h1.4 v6.8 h-1.4z M588.3 270 l-4.4 3.4 l4.4 3.4z M593.8 270 l-5.5 3.4 l5.5 3.4z" fill="#8e8e92" stroke="none" stroke-width="1" />
<path d="M608 270 l-6 3.4 l6 3.4z" fill="#8e8e92" stroke="none" stroke-width="1" />
<rect x="616.70" y="270.30" width="6.30" height="6.30" fill="#8e8e92" />
<path d="M631.3 270 l6.2 3.4 l-6.2 3.4z" fill="#e8423a" stroke="none" stroke-width="1" />
<path d="M645.5 270 l5.5 3.4 l-5.5 3.4z M651 270 l4.4 3.4 l-4.4 3.4z M654.6 270 h1.4 v6.8 h-1.4z" fill="#8e8e92" stroke="none" stroke-width="1" />
<path d="M666 276.5 h5 a2.6 2.6 0 0 0 0 -5.2 h-4.5 a2.6 2.6 0 0 0 -1.4 4.6" fill="none" stroke="#8e8e92" stroke-width="0.9" />
<path d="M666 269.6 l1.8 1.7 l-1.8 1.7" fill="none" stroke="#8e8e92" stroke-width="0.8" />
<path d="M736.6 270.3 l4.5 3.3 l-4.5 3.3z M741.5 270.3 h1.2 v6.6 h-1.2z" fill="#8e8e92" stroke="none" stroke-width="1" />
<path d="M752.8 270.3 h1.2 v6.6 h-1.2z M759 270.3 l-4.5 3.3 l4.5 3.3z" fill="#8e8e92" stroke="none" stroke-width="1" />
<text x="818.00" y="276.37" font-size="7.6" fill="#f0f0f0" font-weight="bold" text-anchor="start" font-family="Liberation Sans" textLength="34.50" lengthAdjust="spacingAndGlyphs">01:02:58:07</text>
<rect x="861.00" y="264.00" width="0.60" height="19.00" fill="#1a1a1c" />
<path d="M871 271.3 h5.5 M871 273.6 h5.5 M871 275.9 h5.5" fill="none" stroke="#6a6a6e" stroke-width="0.9" />
<rect x="113.00" y="282.60" width="774.00" height="0.60" fill="#19191c" />
<rect x="212.50" y="283.10" width="656.50" height="1.60" fill="#78787e" />
<circle cx="868.8" cy="283.9" r="1.1" fill="#e0e0e0"/>
<rect x="207.00" y="284.60" width="680.00" height="7.90" fill="#262629" />
<rect x="210.80" y="284.60" width="0.60" height="5.40" fill="#5a5a60" />
<text x="213.90" y="288.73" font-size="4.2" fill="#7e7e84" font-weight="normal" text-anchor="start" font-family="Liberation Sans" textLength="22.00" lengthAdjust="spacingAndGlyphs" stroke="#7e7e84" stroke-width="0.12">01:00:00:00</text>
<rect x="308.00" y="284.60" width="0.60" height="5.40" fill="#5a5a60" />
<text x="311.10" y="288.73" font-size="4.2" fill="#7e7e84" font-weight="normal" text-anchor="start" font-family="Liberation Sans" textLength="22.00" lengthAdjust="spacingAndGlyphs" stroke="#7e7e84" stroke-width="0.12">01:00:37:12</text>
<rect x="401.50" y="284.60" width="0.60" height="5.40" fill="#5a5a60" />
<text x="404.60" y="288.73" font-size="4.2" fill="#7e7e84" font-weight="normal" text-anchor="start" font-family="Liberation Sans" textLength="22.00" lengthAdjust="spacingAndGlyphs" stroke="#7e7e84" stroke-width="0.12">01:01:15:00</text>
<rect x="495.00" y="284.60" width="0.60" height="5.40" fill="#5a5a60" />
<text x="498.10" y="288.73" font-size="4.2" fill="#7e7e84" font-weight="normal" text-anchor="start" font-family="Liberation Sans" textLength="22.00" lengthAdjust="spacingAndGlyphs" stroke="#7e7e84" stroke-width="0.12">01:01:52:12</text>
<rect x="590.50" y="284.60" width="0.60" height="5.40" fill="#5a5a60" />
<text x="593.60" y="288.73" font-size="4.2" fill="#7e7e84" font-weight="normal" text-anchor="start" font-family="Liberation Sans" textLength="22.00" lengthAdjust="spacingAndGlyphs" stroke="#7e7e84" stroke-width="0.12">01:02:30:00</text>
<rect x="687.50" y="284.60" width="0.60" height="5.40" fill="#5a5a60" />
<text x="690.60" y="288.73" font-size="4.2" fill="#7e7e84" font-weight="normal" text-anchor="start" font-family="Liberation Sans" textLength="22.00" lengthAdjust="spacingAndGlyphs" stroke="#7e7e84" stroke-width="0.12">01:03:07:12</text>
<rect x="783.50" y="284.60" width="0.60" height="5.40" fill="#5a5a60" />
<text x="786.60" y="288.73" font-size="4.2" fill="#7e7e84" font-weight="normal" text-anchor="start" font-family="Liberation Sans" textLength="22.00" lengthAdjust="spacingAndGlyphs" stroke="#7e7e84" stroke-width="0.12">01:03:45:00</text>
<rect x="261.75" y="284.60" width="0.50" height="2.40" fill="#4a4a50" />
<rect x="356.75" y="284.60" width="0.50" height="2.40" fill="#4a4a50" />
<rect x="450.75" y="284.60" width="0.50" height="2.40" fill="#4a4a50" />
<rect x="544.75" y="284.60" width="0.50" height="2.40" fill="#4a4a50" />
<rect x="640.75" y="284.60" width="0.50" height="2.40" fill="#4a4a50" />
<rect x="737.75" y="284.60" width="0.50" height="2.40" fill="#4a4a50" />
<rect x="833.75" y="284.60" width="0.50" height="2.40" fill="#4a4a50" />
<rect x="207.00" y="334.40" width="680.00" height="1.40" fill="#4a4a50" />
<rect x="113.00" y="334.80" width="94.00" height="0.80" fill="#19191c" />
<text x="201.20" y="300.11" font-size="3.6" fill="#8a8a8e" font-weight="normal" text-anchor="middle" font-family="Liberation Sans" textLength="4.60" lengthAdjust="spacingAndGlyphs" stroke="#8a8a8e" stroke-width="0.15">V4</text>
<text x="201.20" y="308.91" font-size="3.6" fill="#8a8a8e" font-weight="normal" text-anchor="middle" font-family="Liberation Sans" textLength="4.60" lengthAdjust="spacingAndGlyphs" stroke="#8a8a8e" stroke-width="0.15">V3</text>
<text x="201.20" y="317.71" font-size="3.6" fill="#8a8a8e" font-weight="normal" text-anchor="middle" font-family="Liberation Sans" textLength="4.60" lengthAdjust="spacingAndGlyphs" stroke="#8a8a8e" stroke-width="0.15">V2</text>
<path d="M199 326.8 l3.5 -3 l1.2 1.2 l-3.5 3 z" fill="#c83030" stroke="none" stroke-width="1" />
<path d="M124 306.3 h6.5 M124 308.3 h6.5 M124 310.3 h5 l1.5 -1" fill="none" stroke="#6a6a6e" stroke-width="0.7" />
<path d="M150.5 311 v-4.5 M152.8 311 v-6 M155 311 v-3.5 M146.5 310.5 l3 -3" fill="none" stroke="#6a6a6e" stroke-width="0.9" />
<path d="M178 306 h5 v5 h-5z M184.5 307 l4 -3 M185.5 305 l1 -1.5" fill="none" stroke="#6a6a6e" stroke-width="0.7" />
<rect x="223.10" y="295.50" width="8.10" height="6.70" fill="#a2cb12" rx="1"/>
<rect x="235.90" y="295.50" width="7.70" height="6.70" fill="#a2cb12" rx="1"/>
<rect x="246.90" y="295.50" width="9.30" height="6.70" fill="#a2cb12" rx="1"/>
<rect x="257.60" y="295.50" width="6.00" height="6.70" fill="#4b82b8" rx="1"/>
<rect x="296.00" y="295.50" width="2.90" height="6.70" fill="#4b82b8" rx="1"/>
<rect x="299.60" y="295.50" width="3.00" height="6.70" fill="#4b82b8" rx="1"/>
<rect x="311.80" y="295.50" width="7.80" height="6.70" fill="#a2cb12" rx="1"/>
<rect x="426.80" y="295.50" width="62.80" height="6.70" fill="#cfc6a6" rx="1"/>
<rect x="495.90" y="295.50" width="6.90" height="6.70" fill="#a2cb12" rx="1"/>
<rect x="534.80" y="295.50" width="42.20" height="6.70" fill="#cfc6a6" rx="1"/>
<rect x="597.20" y="295.50" width="6.00" height="6.70" fill="#a2cb12" rx="1"/>
<rect x="656.00" y="295.50" width="4.60" height="6.70" fill="#cfc6a6" rx="1"/>
<rect x="688.00" y="295.50" width="27.30" height="6.70" fill="#cfc6a6" rx="1"/>
<rect x="838.70" y="295.50" width="6.80" height="6.70" fill="#a2cb12" rx="1"/>
<rect x="846.10" y="295.50" width="9.30" height="6.70" fill="#a2cb12" rx="1"/>
<rect x="223.10" y="304.20" width="18.60" height="7.00" fill="#b48ac8" rx="1"/>
<rect x="257.90" y="304.20" width="5.80" height="7.00" fill="#f0a030" rx="1"/>
<rect x="264.50" y="304.20" width="6.10" height="7.00" fill="#f0a030" rx="1"/>
<rect x="271.50" y="304.20" width="4.20" height="7.00" fill="#f0a030" rx="1"/>
<rect x="277.00" y="304.20" width="6.40" height="7.00" fill="#f0a030" rx="1"/>
<rect x="311.50" y="304.20" width="10.80" height="7.00" fill="#4b82b8" rx="1"/>
<rect x="327.20" y="304.20" width="4.20" height="7.00" fill="#f0a030" rx="1"/>
<rect x="332.00" y="304.20" width="3.60" height="7.00" fill="#f0a030" rx="1"/>
<rect x="336.80" y="304.20" width="4.90" height="7.00" fill="#4b82b8" rx="1"/>
<rect x="342.60" y="304.20" width="4.20" height="7.00" fill="#f0a030" rx="1"/>
<rect x="347.90" y="304.20" width="8.80" height="7.00" fill="#4b82b8" rx="1"/>
<rect x="357.75" y="304.20" width="7.05" height="7.00" fill="#4b82b8" rx="1"/>
<rect x="376.00" y="304.20" width="6.80" height="7.00" fill="#e0508a" rx="1"/>
<rect x="390.30" y="304.20" width="7.50" height="7.00" fill="#e0508a" rx="1"/>
<rect x="399.10" y="304.20" width="11.90" height="7.00" fill="#4b82b8" rx="1"/>
<rect x="412.30" y="304.20" width="10.70" height="7.00" fill="#4b82b8" rx="1"/>
<rect x="426.30" y="304.20" width="12.30" height="7.00" fill="#4b82b8" rx="1"/>
<rect x="439.20" y="304.20" width="12.60" height="7.00" fill="#4b82b8" rx="1"/>
<rect x="452.40" y="304.20" width="13.80" height="7.00" fill="#4b82b8" rx="1"/>
<rect x="466.80" y="304.20" width="4.90" height="7.00" fill="#4b82b8" rx="1"/>
<rect x="472.30" y="304.20" width="7.50" height="7.00" fill="#4b82b8" rx="1"/>
<rect x="480.40" y="304.20" width="9.80" height="7.00" fill="#4b82b8" rx="1"/>
<rect x="495.20" y="304.20" width="5.20" height="7.00" fill="#4b82b8" rx="1"/>
<rect x="501.00" y="304.20" width="3.90" height="7.00" fill="#4b82b8" rx="1"/>
<rect x="505.50" y="304.20" width="7.90" height="7.00" fill="#4b82b8" rx="1"/>
<rect x="514.00" y="304.20" width="6.20" height="7.00" fill="#4b82b8" rx="1"/>
<rect x="530.00" y="304.20" width="4.00" height="7.00" fill="#4b82b8" rx="1"/>
<rect x="534.60" y="304.20" width="12.80" height="7.00" fill="#4b82b8" rx="1"/>
<rect x="548.00" y="304.20" width="13.40" height="7.00" fill="#4b82b8" rx="1"/>
<rect x="562.00" y="304.20" width="15.80" height="7.00" fill="#4b82b8" rx="1"/>
<rect x="589.50" y="304.20" width="7.90" height="7.00" fill="#4b82b8" rx="1"/>
<rect x="598.00" y="304.20" width="5.40" height="7.00" fill="#4b82b8" rx="1"/>
<rect x="604.00" y="304.20" width="8.10" height="7.00" fill="#4b82b8" rx="1"/>
<rect x="627.20" y="304.20" width="6.20" height="7.00" fill="#4b82b8" rx="1"/>
<rect x="634.00" y="304.20" width="9.80" height="7.00" fill="#4b82b8" rx="1"/>
<rect x="640.00" y="304.20" width="1.80" height="7.00" fill="#4b82b8" rx="1"/>
<rect x="656.00" y="304.20" width="14.80" height="7.00" fill="#4b82b8" rx="1"/>
<rect x="672.00" y="304.20" width="4.60" height="7.00" fill="#4b82b8" rx="1"/>
<rect x="678.00" y="304.20" width="5.80" height="7.00" fill="#4b82b8" rx="1"/>
<rect x="687.00" y="304.20" width="15.30" height="7.00" fill="#4b82b8" rx="1"/>
<rect x="703.75" y="304.20" width="11.55" height="7.00" fill="#4b82b8" rx="1"/>
<rect x="740.00" y="304.20" width="12.80" height="7.00" fill="#4b82b8" rx="1"/>
<rect x="764.25" y="304.20" width="4.35" height="7.00" fill="#4b82b8" rx="1"/>
<rect x="774.25" y="304.20" width="6.15" height="7.00" fill="#4b82b8" rx="1"/>
<rect x="781.00" y="304.20" width="8.80" height="7.00" fill="#4b82b8" rx="1"/>
<rect x="798.00" y="304.20" width="9.80" height="7.00" fill="#4b82b8" rx="1"/>
<rect x="816.75" y="304.20" width="4.65" height="7.00" fill="#4b82b8" rx="1"/>
<rect x="822.00" y="304.20" width="5.30" height="7.00" fill="#4b82b8" rx="1"/>
<rect x="859.25" y="304.20" width="9.15" height="7.00" fill="#4b82b8" rx="1"/>
<rect x="242.30" y="304.20" width="1.60" height="7.00" fill="#9a9a9e" rx="1"/>
<rect x="423.20" y="304.60" width="3.20" height="6.20" fill="none" stroke="#d8d8d8" stroke-width="0.6" rx="0.8"/>
<rect x="864.80" y="304.60" width="3.80" height="6.20" fill="#3a5a7a" stroke="#d8d8d8" stroke-width="0.6" rx="0.8"/>
<rect x="257.90" y="313.00" width="3.90" height="6.90" fill="#4b82b8" rx="1"/>
<rect x="276.30" y="313.00" width="5.30" height="6.90" fill="#4b82b8" rx="1"/>
<rect x="290.60" y="313.00" width="8.20" height="6.90" fill="#4b82b8" rx="1"/>
<rect x="307.10" y="313.00" width="3.80" height="6.90" fill="#4b82b8" rx="1"/>
<rect x="320.35" y="313.00" width="7.75" height="6.90" fill="#4b82b8" rx="1"/>
<rect x="336.85" y="313.00" width="4.85" height="6.90" fill="#4b82b8" rx="1"/>
<rect x="351.80" y="313.00" width="13.00" height="6.90" fill="#4b82b8" rx="1"/>
<rect x="372.70" y="313.00" width="4.20" height="6.90" fill="#4b82b8" rx="1"/>
<rect x="381.50" y="313.00" width="1.30" height="6.90" fill="#4b82b8" rx="1"/>
<rect x="387.50" y="313.00" width="37.40" height="6.90" fill="#4b82b8" rx="1"/>
<rect x="513.20" y="313.00" width="7.50" height="6.90" fill="#4b82b8" rx="1"/>
<rect x="526.40" y="313.00" width="7.70" height="6.90" fill="#4b82b8" rx="1"/>
<rect x="539.60" y="313.00" width="6.50" height="6.90" fill="#4b82b8" rx="1"/>
<rect x="549.90" y="313.00" width="5.80" height="6.90" fill="#4b82b8" rx="1"/>
<rect x="562.90" y="313.00" width="13.70" height="6.90" fill="#4b82b8" rx="1"/>
<rect x="578.70" y="313.00" width="3.40" height="6.90" fill="#4b82b8" rx="1"/>
<rect x="606.80" y="313.00" width="11.80" height="6.90" fill="#4b82b8" rx="1"/>
<rect x="627.20" y="313.00" width="11.10" height="6.90" fill="#4b82b8" rx="1"/>
<rect x="648.80" y="313.00" width="7.80" height="6.90" fill="#4b82b8" rx="1"/>
<rect x="663.00" y="313.00" width="9.30" height="6.90" fill="#4b82b8" rx="1"/>
<rect x="682.50" y="313.00" width="8.50" height="6.90" fill="#4b82b8" rx="1"/>
<rect x="709.50" y="313.00" width="15.30" height="6.90" fill="#4b82b8" rx="1"/>
<rect x="731.50" y="313.00" width="3.80" height="6.90" fill="#4b82b8" rx="1"/>
<rect x="744.00" y="313.00" width="3.80" height="6.90" fill="#4b82b8" rx="1"/>
<rect x="753.75" y="313.00" width="6.05" height="6.90" fill="#4b82b8" rx="1"/>
<rect x="766.25" y="313.00" width="5.35" height="6.90" fill="#4b82b8" rx="1"/>
<rect x="778.75" y="313.00" width="7.25" height="6.90" fill="#4b82b8" rx="1"/>
<rect x="796.25" y="313.00" width="6.05" height="6.90" fill="#4b82b8" rx="1"/>
<rect x="811.25" y="313.00" width="3.65" height="6.90" fill="#4b82b8" rx="1"/>
<rect x="815.50" y="313.00" width="3.80" height="6.90" fill="#4b82b8" rx="1"/>
<rect x="825.50" y="313.00" width="8.00" height="6.90" fill="#4b82b8" rx="1"/>
<rect x="213.60" y="321.90" width="26.90" height="7.00" fill="#4a4c50" rx="1"/>
<rect x="246.20" y="321.90" width="15.20" height="7.00" fill="#4b82b8" rx="1"/>
<rect x="262.70" y="321.90" width="12.60" height="7.00" fill="#4b82b8" rx="1"/>
<rect x="276.60" y="321.90" width="21.80" height="7.00" fill="#4b82b8" rx="1"/>
<rect x="301.20" y="321.90" width="75.70" height="7.00" fill="#4b82b8" rx="1"/>
<rect x="377.10" y="321.90" width="4.20" height="7.00" fill="#5a5c60" rx="1"/>
<rect x="382.20" y="321.90" width="42.50" height="7.00" fill="#4b82b8" rx="1"/>
<rect x="424.90" y="321.90" width="62.20" height="7.00" fill="#4a4c50" rx="1"/>
<rect x="487.30" y="321.90" width="14.10" height="7.00" fill="#4b82b8" rx="1"/>
<rect x="502.00" y="321.90" width="11.40" height="7.00" fill="#4b82b8" rx="1"/>
<rect x="514.00" y="321.90" width="13.40" height="7.00" fill="#4b82b8" rx="1"/>
<rect x="528.00" y="321.90" width="16.40" height="7.00" fill="#4b82b8" rx="1"/>
<rect x="545.00" y="321.90" width="10.40" height="7.00" fill="#4b82b8" rx="1"/>
<rect x="556.00" y="321.90" width="23.40" height="7.00" fill="#4b82b8" rx="1"/>
<rect x="580.00" y="321.90" width="19.40" height="7.00" fill="#4b82b8" rx="1"/>
<rect x="600.00" y="321.90" width="40.00" height="7.00" fill="#4b82b8" rx="1"/>
<rect x="640.00" y="321.90" width="24.40" height="7.00" fill="#4b82b8" rx="1"/>
<rect x="665.00" y="321.90" width="6.40" height="7.00" fill="#4b82b8" rx="1"/>
<rect x="672.00" y="321.90" width="24.00" height="7.00" fill="#4b82b8" rx="1"/>
<rect x="696.25" y="321.90" width="12.25" height="7.00" fill="#4a4c50" rx="1"/>
<rect x="708.75" y="321.90" width="16.05" height="7.00" fill="#4b82b8" rx="1"/>
<rect x="725.00" y="321.90" width="27.80" height="7.00" fill="#4b82b8" rx="1"/>
<rect x="753.00" y="321.90" width="6.80" height="7.00" fill="#4b82b8" rx="1"/>
<rect x="760.00" y="321.90" width="55.80" height="7.00" fill="#4b82b8" rx="1"/>
<rect x="816.00" y="321.90" width="21.70" height="7.00" fill="#4b82b8" rx="1"/>
<rect x="837.30" y="321.90" width="1.70" height="7.00" fill="#c8c8c8" />
<rect x="241.40" y="322.20" width="4.60" height="6.40" fill="#2a4a6a" stroke="#d8d8d8" stroke-width="0.6" rx="0.8"/>
<rect x="664.60" y="284.00" width="1.20" height="51.00" fill="#e03a30" />
<path d="M661.6 283.2 h7.2 l-3.6 4.2z" fill="#f04a3a" stroke="none" stroke-width="1" />
<rect x="207.00" y="335.80" width="680.00" height="0.40" fill="#2e2e33" />
<rect x="207.00" y="334.90" width="680.00" height="1.40" fill="#5a5a60" />
<rect x="262.70" y="337.00" width="0.60" height="9.00" fill="#6a6a70" />
<text x="264.80" y="343.17" font-size="4.3" fill="#8e8e94" font-weight="normal" text-anchor="start" font-family="Liberation Sans" textLength="21.50" lengthAdjust="spacingAndGlyphs" stroke="#8e8e94" stroke-width="0.12">01:02:54:00</text>
<rect x="262.70" y="349.00" width="0.60" height="128.00" fill="#303036" />
<rect x="395.70" y="337.00" width="0.60" height="9.00" fill="#6a6a70" />
<text x="397.80" y="343.17" font-size="4.3" fill="#8e8e94" font-weight="normal" text-anchor="start" font-family="Liberation Sans" textLength="21.50" lengthAdjust="spacingAndGlyphs" stroke="#8e8e94" stroke-width="0.12">01:02:56:00</text>
<rect x="395.70" y="349.00" width="0.60" height="128.00" fill="#303036" />
<rect x="528.70" y="337.00" width="0.60" height="9.00" fill="#6a6a70" />
<text x="530.80" y="343.17" font-size="4.3" fill="#8e8e94" font-weight="normal" text-anchor="start" font-family="Liberation Sans" textLength="21.50" lengthAdjust="spacingAndGlyphs" stroke="#8e8e94" stroke-width="0.12">01:02:58:00</text>
<rect x="528.70" y="349.00" width="0.60" height="128.00" fill="#303036" />
<rect x="659.20" y="337.00" width="0.60" height="9.00" fill="#6a6a70" />
<text x="661.30" y="343.17" font-size="4.3" fill="#8e8e94" font-weight="normal" text-anchor="start" font-family="Liberation Sans" textLength="21.50" lengthAdjust="spacingAndGlyphs" stroke="#8e8e94" stroke-width="0.12">01:03:00:00</text>
<rect x="659.20" y="349.00" width="0.60" height="128.00" fill="#303036" />
<rect x="792.20" y="337.00" width="0.60" height="9.00" fill="#6a6a70" />
<text x="794.30" y="343.17" font-size="4.3" fill="#8e8e94" font-weight="normal" text-anchor="start" font-family="Liberation Sans" textLength="21.50" lengthAdjust="spacingAndGlyphs" stroke="#8e8e94" stroke-width="0.12">01:03:02:00</text>
<rect x="792.20" y="349.00" width="0.60" height="128.00" fill="#303036" />
<rect x="329.20" y="337.00" width="0.60" height="2.50" fill="#55555a" />
<rect x="462.20" y="337.00" width="0.60" height="2.50" fill="#55555a" />
<rect x="595.20" y="337.00" width="0.60" height="2.50" fill="#55555a" />
<rect x="725.70" y="337.00" width="0.60" height="2.50" fill="#55555a" />
<rect x="858.70" y="337.00" width="0.60" height="2.50" fill="#55555a" />
<path d="M122.5 339.5 h9.5 v5.5 h-9.5z" fill="#c0c0c0" stroke="none" stroke-width="1" />
<rect x="124.00" y="341.00" width="7.00" height="2.50" fill="#2a2a2e" />
<rect x="125.50" y="341.60" width="4.00" height="1.40" fill="#c0c0c0" />
<path d="M143.5 338.5 v3.5 M141 342.5 h5 M143.5 342.5 v3" fill="none" stroke="#5a5a5e" stroke-width="0.8" />
<path d="M161.3 338.5 v3 M158.5 342 h5.6 v3 h-5.6z" fill="#7a7a7e" stroke="none" stroke-width="1" />
<path d="M175.8 339 h4.4 v3.3 l-2.2 2.2 l-2.2 -2.2z" fill="#2a8cf0" stroke="none" stroke-width="1" />
<path d="M191.5 342.5 q4 -4 8 0 q-4 4 -8 0z" fill="#5a5a5e" stroke="none" stroke-width="1" />
<circle cx="195.5" cy="342.5" r="1.3" fill="#2a2a2e"/>
<rect x="113.00" y="348.80" width="94.00" height="0.60" fill="#19191c" />
<rect x="113.00" y="382.10" width="94.00" height="0.80" fill="#18181b" />
<rect x="113.00" y="414.30" width="94.00" height="0.80" fill="#18181b" />
<rect x="113.00" y="446.40" width="94.00" height="0.80" fill="#18181b" />
<rect x="194.60" y="349.00" width="0.60" height="128.00" fill="#1a1a1d" />
<rect x="206.60" y="349.00" width="0.70" height="128.00" fill="#18181b" />
<path d="M125.5 363.60 l1.6 1.3 v3 l-1.6 1.3 l-1.6 -1.3 v-3z" fill="none" stroke="#4a4a4e" stroke-width="0.6" />
<path d="M143 367.90 v-2 a2 2 0 0 1 4 0 v2 z" fill="#4a4a4e" stroke="none" stroke-width="1" />
<path d="M161.5 365.20 h1.6 l2.2 -2 v6.4 l-2.2 -2 h-1.6z" fill="#f0f0f0" stroke="none" stroke-width="1" />
<path d="M166.3 364.80 q1 1.6 0 3.2" fill="none" stroke="#f0f0f0" stroke-width="0.6" />
<path d="M180.5 364.10 h6.5 v4.6 h-6.5z" fill="#b8b8bc" stroke="none" stroke-width="1" />
<rect x="182.60" y="365.40" width="2.30" height="2.00" fill="#3a3a3e" />
<path d="M125.5 395.70 l1.6 1.3 v3 l-1.6 1.3 l-1.6 -1.3 v-3z" fill="none" stroke="#4a4a4e" stroke-width="0.6" />
<path d="M143 400.00 v-2 a2 2 0 0 1 4 0 v2 z" fill="#4a4a4e" stroke="none" stroke-width="1" />
<path d="M161.5 397.30 h1.6 l2.2 -2 v6.4 l-2.2 -2 h-1.6z" fill="#f0f0f0" stroke="none" stroke-width="1" />
<path d="M166.3 396.90 q1 1.6 0 3.2" fill="none" stroke="#f0f0f0" stroke-width="0.6" />
<path d="M180.5 396.20 h6.5 v4.6 h-6.5z" fill="#b8b8bc" stroke="none" stroke-width="1" />
<rect x="182.60" y="397.50" width="2.30" height="2.00" fill="#3a3a3e" />
<path d="M125.5 427.70 l1.6 1.3 v3 l-1.6 1.3 l-1.6 -1.3 v-3z" fill="none" stroke="#4a4a4e" stroke-width="0.6" />
<path d="M143 432.00 v-2 a2 2 0 0 1 4 0 v2 z" fill="#4a4a4e" stroke="none" stroke-width="1" />
<path d="M161.5 429.30 h1.6 l2.2 -2 v6.4 l-2.2 -2 h-1.6z" fill="#e8402a" stroke="none" stroke-width="1" />
<path d="M166.3 428.90 q1 1.6 0 3.2" fill="none" stroke="#e8402a" stroke-width="0.6" />
<path d="M180.5 428.20 h6.5 v4.6 h-6.5z" fill="#b8b8bc" stroke="none" stroke-width="1" />
<rect x="182.60" y="429.50" width="2.30" height="2.00" fill="#3a3a3e" />
<path d="M125.5 459.60 l1.6 1.3 v3 l-1.6 1.3 l-1.6 -1.3 v-3z" fill="none" stroke="#4a4a4e" stroke-width="0.6" />
<path d="M143 463.90 v-2 a2 2 0 0 1 4 0 v2 z" fill="#4a4a4e" stroke="none" stroke-width="1" />
<path d="M161.5 461.20 h1.6 l2.2 -2 v6.4 l-2.2 -2 h-1.6z" fill="#f0f0f0" stroke="none" stroke-width="1" />
<path d="M166.3 460.80 q1 1.6 0 3.2" fill="none" stroke="#f0f0f0" stroke-width="0.6" />
<path d="M180.5 460.10 h6.5 v4.6 h-6.5z" fill="#b8b8bc" stroke="none" stroke-width="1" />
<rect x="182.60" y="461.40" width="2.30" height="2.00" fill="#3a3a3e" />
<text x="201.20" y="368.15" font-size="4.8" fill="#78787c" font-weight="normal" text-anchor="middle" font-family="Liberation Sans" textLength="6.30" lengthAdjust="spacingAndGlyphs" stroke="#78787c" stroke-width="0.22">V4</text>
<text x="201.20" y="392.35" font-size="4.8" fill="#78787c" font-weight="normal" text-anchor="middle" font-family="Liberation Sans" textLength="6.30" lengthAdjust="spacingAndGlyphs" stroke="#78787c" stroke-width="0.22">V3</text>
<text x="201.20" y="407.55" font-size="4.8" fill="#78787c" font-weight="normal" text-anchor="middle" font-family="Liberation Sans" textLength="6.30" lengthAdjust="spacingAndGlyphs" stroke="#78787c" stroke-width="0.22">A3</text>
<text x="201.20" y="424.25" font-size="4.8" fill="#78787c" font-weight="normal" text-anchor="middle" font-family="Liberation Sans" textLength="6.30" lengthAdjust="spacingAndGlyphs" stroke="#78787c" stroke-width="0.22">V2</text>
<text x="201.20" y="440.05" font-size="4.8" fill="#78787c" font-weight="normal" text-anchor="middle" font-family="Liberation Sans" textLength="6.30" lengthAdjust="spacingAndGlyphs" stroke="#78787c" stroke-width="0.22">A2</text>
<text x="201.20" y="456.15" font-size="4.8" fill="#d83a30" font-weight="normal" text-anchor="middle" font-family="Liberation Sans" textLength="6.30" lengthAdjust="spacingAndGlyphs" stroke="#d83a30" stroke-width="0.22">V1</text>
<text x="201.20" y="471.75" font-size="4.8" fill="#d83a30" font-weight="normal" text-anchor="middle" font-family="Liberation Sans" textLength="6.30" lengthAdjust="spacingAndGlyphs" stroke="#d83a30" stroke-width="0.22">A1</text>
<g clip-path="url(#tlclip)">
<rect x="299.50" y="350.20" width="126.70" height="31.40" fill="#c8bfa0" rx="1.5"/>
<path d="M359.50 362.50 h-1.2 v7 h1.2 M365.50 362.50 h1.2 v7 h-1.2" fill="none" stroke="#8e8a80" stroke-width="0.7" />
<path d="M360.70 366.00 h3.6" fill="none" stroke="#8e8a80" stroke-width="0.6" />
<circle cx="360.60" cy="366.00" r="0.55" fill="#8e8a80"/><circle cx="364.40" cy="366.00" r="0.55" fill="#8e8a80"/>
<rect x="300.80" y="375.20" width="5.50" height="5.20" fill="#2a2a2e" rx="1"/>
<path d="M302.00 376.40 h3.1 M303.55 376.40 v3" fill="none" stroke="#e8e8e8" stroke-width="1.0" />
<rect x="299.50" y="382.70" width="400.70" height="22.90" fill="#1e3a5c" />
<g filter="url(#bl1)">
<rect x="300.30" y="383.60" width="399.20" height="20.40" fill="url(#desP)" />
</g>
<path d="M497.00 390.50 h-1.2 v7 h1.2 M503.00 390.50 h1.2 v7 h-1.2" fill="none" stroke="#e8e8e8" stroke-width="0.7" />
<path d="M498.20 394.00 h3.6" fill="none" stroke="#e8e8e8" stroke-width="0.6" />
<circle cx="498.10" cy="394.00" r="0.55" fill="#e8e8e8"/><circle cx="501.90" cy="394.00" r="0.55" fill="#e8e8e8"/>
<rect x="300.80" y="398.20" width="5.50" height="5.20" fill="#2a2a2e" rx="1"/>
<circle cx="303.55" cy="400.80" r="1.6" fill="none" stroke="#c8c8c8" stroke-width="0.6"/>
<rect x="700.30" y="382.70" width="143.50" height="22.90" fill="#1e3a5c" />
<rect x="701.20" y="383.60" width="141.80" height="20.40" fill="#2e2e2c" />
<g filter="url(#bl1)">
<rect x="701.20" y="389.00" width="17.00" height="15.00" fill="#4a4a48" />
<rect x="718.00" y="389.00" width="9.00" height="15.00" fill="#8e8e8a" />
<rect x="727.00" y="389.00" width="66.00" height="15.00" fill="#2a2a28" />
<rect x="793.00" y="389.00" width="21.00" height="15.00" fill="#5a5a56" />
<rect x="814.00" y="389.00" width="29.00" height="15.00" fill="#8e8a82" />
<rect x="814.00" y="396.50" width="29.00" height="7.50" fill="#6e6252" />
<rect x="740.00" y="393.00" width="50.00" height="5.00" fill="#4a4a46" />
</g>
<rect x="701.20" y="384.20" width="141.80" height="4.80" fill="#2a2a16" />
<rect x="702.00" y="385.00" width="1.00" height="3.40" fill="#bab420" />
<rect x="704.00" y="385.00" width="1.00" height="3.40" fill="#bab420" />
<rect x="706.00" y="385.00" width="1.00" height="3.40" fill="#bab420" />
<rect x="708.00" y="385.00" width="1.00" height="3.40" fill="#bab420" />
<rect x="710.00" y="385.00" width="1.00" height="3.40" fill="#bab420" />
<rect x="712.00" y="385.00" width="1.00" height="3.40" fill="#bab420" />
<rect x="714.00" y="385.00" width="1.00" height="3.40" fill="#bab420" />
<rect x="716.00" y="385.00" width="1.00" height="3.40" fill="#bab420" />
<rect x="718.00" y="385.00" width="1.00" height="3.40" fill="#bab420" />
<rect x="720.00" y="385.00" width="1.00" height="3.40" fill="#bab420" />
<rect x="722.00" y="385.00" width="1.00" height="3.40" fill="#bab420" />
<rect x="724.00" y="385.00" width="1.00" height="3.40" fill="#bab420" />
<rect x="726.00" y="385.00" width="1.00" height="3.40" fill="#bab420" />
<rect x="728.00" y="385.00" width="1.00" height="3.40" fill="#bab420" />
<rect x="730.00" y="385.00" width="1.00" height="3.40" fill="#bab420" />
<rect x="732.00" y="385.00" width="1.00" height="3.40" fill="#bab420" />
<rect x="734.00" y="385.00" width="1.00" height="3.40" fill="#bab420" />
<rect x="736.00" y="385.00" width="1.00" height="3.40" fill="#bab420" />
<rect x="738.00" y="385.00" width="1.00" height="3.40" fill="#bab420" />
<rect x="740.00" y="385.00" width="1.00" height="3.40" fill="#bab420" />
<rect x="742.00" y="385.00" width="1.00" height="3.40" fill="#bab420" />
<rect x="744.00" y="385.00" width="1.00" height="3.40" fill="#bab420" />
<rect x="746.00" y="385.00" width="1.00" height="3.40" fill="#bab420" />
<rect x="748.00" y="385.00" width="1.00" height="3.40" fill="#bab420" />
<rect x="750.00" y="385.00" width="1.00" height="3.40" fill="#bab420" />
<rect x="752.00" y="385.00" width="1.00" height="3.40" fill="#bab420" />
<rect x="754.00" y="385.00" width="1.00" height="3.40" fill="#bab420" />
<rect x="756.00" y="385.00" width="1.00" height="3.40" fill="#bab420" />
<rect x="758.00" y="385.00" width="1.00" height="3.40" fill="#bab420" />
<rect x="760.00" y="385.00" width="1.00" height="3.40" fill="#bab420" />
<rect x="762.00" y="385.00" width="1.00" height="3.40" fill="#bab420" />
<rect x="764.00" y="385.00" width="1.00" height="3.40" fill="#bab420" />
<rect x="766.00" y="385.00" width="1.00" height="3.40" fill="#bab420" />
<rect x="768.00" y="385.00" width="1.00" height="3.40" fill="#bab420" />
<rect x="770.00" y="385.00" width="1.00" height="3.40" fill="#bab420" />
<rect x="772.00" y="385.00" width="1.00" height="3.40" fill="#bab420" />
<rect x="774.00" y="385.00" width="1.00" height="3.40" fill="#bab420" />
<rect x="776.00" y="385.00" width="1.00" height="3.40" fill="#bab420" />
<rect x="778.00" y="385.00" width="1.00" height="3.40" fill="#bab420" />
<rect x="780.00" y="385.00" width="1.00" height="3.40" fill="#bab420" />
<rect x="782.00" y="385.00" width="1.00" height="3.40" fill="#bab420" />
<rect x="784.00" y="385.00" width="1.00" height="3.40" fill="#bab420" />
<rect x="786.00" y="385.00" width="1.00" height="3.40" fill="#bab420" />
<rect x="788.00" y="385.00" width="1.00" height="3.40" fill="#bab420" />
<rect x="790.00" y="385.00" width="1.00" height="3.40" fill="#bab420" />
<rect x="792.00" y="385.00" width="1.00" height="3.40" fill="#bab420" />
<rect x="794.00" y="385.00" width="1.00" height="3.40" fill="#bab420" />
<rect x="796.00" y="385.00" width="1.00" height="3.40" fill="#bab420" />
<rect x="798.00" y="385.00" width="1.00" height="3.40" fill="#bab420" />
<rect x="800.00" y="385.00" width="1.00" height="3.40" fill="#bab420" />
<rect x="802.00" y="385.00" width="1.00" height="3.40" fill="#bab420" />
<rect x="804.00" y="385.00" width="1.00" height="3.40" fill="#bab420" />
<rect x="806.00" y="385.00" width="1.00" height="3.40" fill="#bab420" />
<rect x="808.00" y="385.00" width="1.00" height="3.40" fill="#bab420" />
<rect x="810.00" y="385.00" width="1.00" height="3.40" fill="#bab420" />
<rect x="812.00" y="385.00" width="1.00" height="3.40" fill="#bab420" />
<rect x="814.00" y="385.00" width="1.00" height="3.40" fill="#bab420" />
<rect x="816.00" y="385.00" width="1.00" height="3.40" fill="#bab420" />
<rect x="818.00" y="385.00" width="1.00" height="3.40" fill="#bab420" />
<rect x="820.00" y="385.00" width="1.00" height="3.40" fill="#bab420" />
<rect x="822.00" y="385.00" width="1.00" height="3.40" fill="#bab420" />
<rect x="824.00" y="385.00" width="1.00" height="3.40" fill="#bab420" />
<rect x="826.00" y="385.00" width="1.00" height="3.40" fill="#bab420" />
<rect x="828.00" y="385.00" width="1.00" height="3.40" fill="#bab420" />
<rect x="830.00" y="385.00" width="1.00" height="3.40" fill="#bab420" />
<rect x="832.00" y="385.00" width="1.00" height="3.40" fill="#bab420" />
<rect x="834.00" y="385.00" width="1.00" height="3.40" fill="#bab420" />
<rect x="836.00" y="385.00" width="1.00" height="3.40" fill="#bab420" />
<rect x="838.00" y="385.00" width="1.00" height="3.40" fill="#bab420" />
<rect x="840.00" y="385.00" width="1.00" height="3.40" fill="#bab420" />
<text x="772.00" y="395.70" font-size="5.2" fill="#f0f0f0" font-weight="normal" text-anchor="middle" font-family="Liberation Sans" stroke="#f0f0f0" stroke-width="0.22">175%</text>
<path d="M769.45 397.22 h-1.2 v7 h1.2 M774.55 397.22 h1.2 v7 h-1.2" fill="none" stroke="#e8e8e8" stroke-width="0.7" />
<path d="M770.47 400.20 h3.6" fill="none" stroke="#e8e8e8" stroke-width="0.6" />
<circle cx="770.38" cy="400.20" r="0.55" fill="#e8e8e8"/><circle cx="773.62" cy="400.20" r="0.55" fill="#e8e8e8"/>
<rect x="701.80" y="398.40" width="5.50" height="5.20" fill="#2a2a2e" rx="1"/>
<circle cx="704.55" cy="401.00" r="1.6" fill="none" stroke="#c8c8c8" stroke-width="0.6"/>
<rect x="708.00" y="398.40" width="5.50" height="5.20" fill="#2a2a2e" rx="1"/>
<circle cx="710.75" cy="401.00" r="1.6" fill="none" stroke="#c8c8c8" stroke-width="0.6"/>
<rect x="844.80" y="382.70" width="42.20" height="22.90" fill="#2e5a88" />
<rect x="845.60" y="383.50" width="41.40" height="21.30" fill="#4a82ba" />
<path d="M864.60 390.50 h-1.2 v7 h1.2 M870.60 390.50 h1.2 v7 h-1.2" fill="none" stroke="#e8e8e8" stroke-width="0.7" />
<path d="M865.80 394.00 h3.6" fill="none" stroke="#e8e8e8" stroke-width="0.6" />
<circle cx="865.70" cy="394.00" r="0.55" fill="#e8e8e8"/><circle cx="869.50" cy="394.00" r="0.55" fill="#e8e8e8"/>
<rect x="846.50" y="398.20" width="5.50" height="5.20" fill="#2a2a2e" rx="1"/>
<circle cx="849.25" cy="400.80" r="1.6" fill="none" stroke="#c8c8c8" stroke-width="0.6"/>
<rect x="207.30" y="406.40" width="679.70" height="7.20" fill="#2e7a50" />
<rect x="207.30" y="406.90" width="679.70" height="6.30" fill="#3c9e62" />
<path d="M207 413.2 L207.3 412.14 L208.3 411.98 L209.3 412.12 L210.3 411.62 L211.3 410.78 L212.3 410.28 L213.3 410.14 L214.3 409.73 L215.3 411.21 L216.3 412.02 L217.3 412.29 L218.3 412.28 L219.3 411.80 L220.3 412.15 L221.3 412.12 L222.3 412.13 L223.3 412.14 L224.3 411.95 L225.3 412.01 L226.3 412.19 L227.3 411.51 L228.3 412.16 L229.3 412.16 L230.3 411.81 L231.3 411.98 L232.3 411.96 L233.3 412.27 L234.3 412.03 L235.3 412.27 L236.3 411.96 L237.3 412.26 L238.3 411.55 L239.3 412.24 L240.3 412.14 L241.3 411.46 L242.3 412.26 L243.3 412.23 L244.3 411.96 L245.3 412.19 L246.3 412.23 L247.3 412.00 L248.3 412.26 L249.3 412.23 L250.3 412.03 L251.3 412.12 L252.3 412.10 L253.3 412.02 L254.3 411.39 L255.3 410.69 L256.3 409.87 L257.3 410.26 L258.3 410.71 L259.3 411.62 L260.3 411.97 L261.3 411.97 L262.3 412.09 L263.3 411.40 L264.3 412.22 L265.3 412.21 L266.3 412.09 L267.3 412.24 L268.3 412.28 L269.3 412.10 L270.3 412.08 L271.3 411.98 L272.3 412.29 L273.3 411.99 L274.3 412.17 L275.3 412.25 L276.3 411.99 L277.3 412.07 L278.3 412.06 L279.3 412.29 L280.3 412.05 L281.3 412.29 L282.3 412.13 L283.3 412.19 L284.3 412.27 L285.3 412.04 L286.3 412.04 L287.3 412.02 L288.3 412.18 L289.3 411.98 L290.3 412.15 L291.3 412.00 L292.3 412.08 L293.3 412.10 L294.3 412.27 L295.3 411.95 L296.3 412.05 L297.3 411.84 L298.3 411.25 L299.3 410.69 L300.3 410.03 L301.3 410.28 L302.3 410.89 L303.3 411.60 L304.3 411.94 L305.3 412.06 L306.3 412.24 L307.3 412.07 L308.3 411.99 L309.3 412.07 L310.3 412.15 L311.3 411.98 L312.3 412.17 L313.3 411.74 L314.3 412.01 L315.3 412.05 L316.3 412.20 L317.3 412.14 L318.3 412.23 L319.3 412.08 L320.3 412.19 L321.3 411.96 L322.3 411.49 L323.3 412.29 L324.3 412.10 L325.3 411.90 L326.3 411.39 L327.3 412.17 L328.3 412.08 L329.3 412.08 L330.3 412.02 L331.3 412.06 L332.3 412.13 L333.3 412.30 L334.3 412.05 L335.3 412.20 L336.3 412.06 L337.3 412.08 L338.3 412.16 L339.3 411.14 L340.3 411.64 L341.3 411.74 L342.3 411.14 L343.3 410.28 L344.3 409.57 L345.3 410.36 L346.3 411.02 L347.3 411.73 L348.3 412.23 L349.3 411.96 L350.3 412.11 L351.3 412.19 L352.3 412.00 L353.3 412.27 L354.3 412.11 L355.3 411.40 L356.3 412.28 L357.3 412.24 L358.3 411.89 L359.3 412.12 L360.3 412.01 L361.3 411.97 L362.3 411.77 L363.3 412.12 L364.3 412.04 L365.3 412.12 L366.3 412.10 L367.3 412.17 L368.3 411.98 L369.3 412.00 L370.3 412.12 L371.3 412.23 L372.3 412.12 L373.3 412.29 L374.3 412.12 L375.3 412.02 L376.3 412.13 L377.3 412.28 L378.3 412.16 L379.3 411.98 L380.3 411.74 L381.3 412.01 L382.3 412.13 L383.3 412.23 L384.3 411.27 L385.3 411.81 L386.3 411.05 L387.3 410.34 L388.3 409.16 L389.3 410.68 L390.3 411.32 L391.3 411.91 L392.3 412.17 L393.3 412.11 L394.3 412.23 L395.3 412.08 L396.3 412.00 L397.3 412.00 L398.3 412.04 L399.3 411.98 L400.3 412.19 L401.3 412.22 L402.3 411.77 L403.3 412.05 L404.3 412.27 L405.3 412.15 L406.3 412.26 L407.3 411.88 L408.3 412.06 L409.3 411.51 L410.3 412.03 L411.3 412.06 L412.3 412.24 L413.3 412.11 L414.3 411.93 L415.3 412.23 L416.3 411.95 L417.3 411.41 L418.3 412.14 L419.3 412.19 L420.3 412.12 L421.3 411.46 L422.3 412.00 L423.3 412.14 L424.3 412.16 L425.3 412.24 L426.3 412.29 L427.3 412.02 L428.3 412.00 L429.3 411.54 L430.3 410.82 L431.3 410.03 L432.3 409.86 L433.3 410.59 L434.3 411.40 L435.3 411.92 L436.3 412.03 L437.3 412.16 L438.3 412.28 L439.3 411.82 L440.3 412.08 L441.3 412.22 L442.3 412.07 L443.3 412.07 L444.3 412.11 L445.3 411.95 L446.3 412.05 L447.3 411.40 L448.3 412.04 L449.3 411.98 L450.3 411.94 L451.3 411.98 L452.3 412.12 L453.3 412.10 L454.3 412.08 L455.3 412.27 L456.3 411.20 L457.3 412.24 L458.3 412.24 L459.3 411.24 L460.3 412.15 L461.3 412.09 L462.3 412.20 L463.3 412.10 L464.3 412.05 L465.3 412.30 L466.3 412.29 L467.3 412.04 L468.3 411.99 L469.3 412.28 L470.3 411.15 L471.3 412.15 L472.3 411.89 L473.3 411.36 L474.3 410.61 L475.3 409.83 L476.3 409.54 L477.3 410.84 L478.3 411.66 L479.3 412.26 L480.3 412.07 L481.3 412.21 L482.3 412.15 L483.3 412.11 L484.3 411.97 L485.3 411.41 L486.3 412.03 L487.3 412.17 L488.3 412.06 L489.3 412.09 L490.3 412.04 L491.3 412.21 L492.3 411.98 L493.3 412.04 L494.3 412.15 L495.3 412.26 L496.3 411.67 L497.3 412.11 L498.3 412.17 L499.3 412.23 L500.3 412.04 L501.3 411.55 L502.3 412.08 L503.3 412.23 L504.3 412.21 L505.3 412.17 L506.3 411.95 L507.3 412.11 L508.3 411.98 L509.3 411.38 L510.3 411.76 L511.3 412.13 L512.3 412.20 L513.3 412.27 L514.3 411.79 L515.3 412.05 L516.3 411.67 L517.3 411.15 L518.3 410.68 L519.3 409.84 L520.3 410.12 L521.3 410.98 L522.3 411.71 L523.3 412.16 L524.3 411.99 L525.3 412.17 L526.3 412.17 L527.3 412.16 L528.3 412.10 L529.3 412.11 L530.3 412.10 L531.3 412.03 L532.3 411.74 L533.3 412.11 L534.3 411.96 L535.3 411.53 L536.3 411.95 L537.3 412.04 L538.3 412.27 L539.3 412.25 L540.3 412.07 L541.3 412.22 L542.3 412.12 L543.3 412.16 L544.3 411.96 L545.3 412.13 L546.3 412.05 L547.3 411.98 L548.3 412.01 L549.3 412.00 L550.3 412.01 L551.3 411.96 L552.3 412.12 L553.3 412.02 L554.3 411.49 L555.3 411.95 L556.3 412.24 L557.3 412.15 L558.3 411.68 L559.3 412.26 L560.3 411.69 L561.3 411.25 L562.3 410.38 L563.3 409.72 L564.3 410.51 L565.3 411.02 L566.3 411.88 L567.3 412.20 L568.3 412.03 L569.3 412.11 L570.3 412.13 L571.3 411.99 L572.3 412.18 L573.3 411.97 L574.3 411.37 L575.3 412.02 L576.3 412.12 L577.3 412.20 L578.3 412.07 L579.3 412.30 L580.3 412.17 L581.3 412.05 L582.3 412.24 L583.3 412.19 L584.3 412.00 L585.3 412.08 L586.3 412.21 L587.3 412.25 L588.3 412.30 L589.3 412.00 L590.3 412.27 L591.3 411.62 L592.3 412.14 L593.3 412.09 L594.3 412.19 L595.3 412.15 L596.3 412.27 L597.3 412.23 L598.3 412.12 L599.3 412.01 L600.3 411.92 L601.3 412.14 L602.3 412.17 L603.3 412.26 L604.3 411.66 L605.3 410.84 L606.3 410.44 L607.3 409.79 L608.3 410.53 L609.3 411.40 L610.3 411.81 L611.3 412.08 L612.3 412.17 L613.3 412.20 L614.3 412.16 L615.3 412.21 L616.3 412.04 L617.3 411.97 L618.3 412.05 L619.3 411.88 L620.3 412.27 L621.3 412.05 L622.3 412.16 L623.3 411.89 L624.3 411.88 L625.3 412.27 L626.3 412.15 L627.3 412.07 L628.3 412.01 L629.3 412.18 L630.3 412.29 L631.3 412.06 L632.3 412.02 L633.3 411.79 L634.3 412.18 L635.3 412.26 L636.3 412.12 L637.3 412.01 L638.3 412.24 L639.3 411.98 L640.3 412.18 L641.3 412.25 L642.3 411.95 L643.3 412.05 L644.3 412.23 L645.3 412.08 L646.3 412.27 L647.3 412.10 L648.3 411.57 L649.3 410.87 L650.3 410.27 L651.3 410.13 L652.3 410.67 L653.3 411.35 L654.3 411.91 L655.3 412.01 L656.3 412.26 L657.3 412.20 L658.3 412.22 L659.3 412.01 L660.3 412.08 L661.3 412.24 L662.3 411.97 L663.3 412.19 L664.3 412.04 L665.3 412.09 L666.3 412.29 L667.3 411.79 L668.3 412.10 L669.3 412.12 L670.3 412.10 L671.3 411.47 L672.3 412.25 L673.3 412.09 L674.3 412.16 L675.3 412.06 L676.3 412.04 L677.3 411.95 L678.3 412.00 L679.3 412.15 L680.3 411.98 L681.3 412.12 L682.3 411.98 L683.3 412.28 L684.3 411.98 L685.3 412.09 L686.3 412.19 L687.3 411.87 L688.3 412.12 L689.3 412.28 L690.3 412.12 L691.3 412.12 L692.3 410.64 L693.3 410.52 L694.3 409.87 L695.3 410.03 L696.3 410.74 L697.3 410.65 L698.3 412.26 L699.3 411.75 L700.3 412.20 L701.3 412.28 L702.3 412.01 L703.3 412.18 L704.3 411.48 L705.3 412.19 L706.3 411.97 L707.3 412.13 L708.3 412.20 L709.3 411.99 L710.3 412.01 L711.3 412.13 L712.3 411.99 L713.3 412.23 L714.3 412.23 L715.3 411.63 L716.3 412.19 L717.3 412.00 L718.3 412.25 L719.3 411.97 L720.3 412.27 L721.3 412.19 L722.3 412.23 L723.3 412.22 L724.3 412.02 L725.3 412.07 L726.3 412.09 L727.3 412.19 L728.3 412.07 L729.3 411.19 L730.3 412.15 L731.3 411.57 L732.3 412.20 L733.3 411.76 L734.3 412.04 L735.3 412.00 L736.3 411.34 L737.3 409.96 L738.3 409.77 L739.3 410.12 L740.3 411.07 L741.3 411.59 L742.3 412.07 L743.3 412.12 L744.3 412.00 L745.3 412.12 L746.3 412.24 L747.3 412.24 L748.3 412.22 L749.3 412.03 L750.3 412.02 L751.3 412.13 L752.3 412.10 L753.3 412.29 L754.3 412.05 L755.3 411.99 L756.3 411.80 L757.3 412.15 L758.3 412.21 L759.3 412.27 L760.3 412.10 L761.3 412.02 L762.3 412.25 L763.3 412.29 L764.3 412.08 L765.3 412.21 L766.3 412.27 L767.3 412.24 L768.3 412.24 L769.3 412.01 L770.3 412.28 L771.3 412.17 L772.3 411.52 L773.3 412.03 L774.3 412.25 L775.3 411.82 L776.3 411.63 L777.3 412.20 L778.3 411.38 L779.3 411.69 L780.3 411.19 L781.3 410.39 L782.3 409.74 L783.3 410.46 L784.3 410.93 L785.3 411.94 L786.3 411.76 L787.3 412.06 L788.3 412.09 L789.3 412.14 L790.3 412.00 L791.3 412.03 L792.3 412.18 L793.3 412.11 L794.3 412.23 L795.3 412.14 L796.3 412.14 L797.3 412.06 L798.3 412.23 L799.3 412.27 L800.3 412.17 L801.3 412.29 L802.3 412.21 L803.3 411.98 L804.3 412.21 L805.3 412.25 L806.3 412.17 L807.3 412.05 L808.3 412.29 L809.3 411.37 L810.3 412.19 L811.3 411.76 L812.3 412.08 L813.3 411.81 L814.3 412.15 L815.3 412.25 L816.3 412.21 L817.3 411.88 L818.3 412.20 L819.3 412.16 L820.3 412.00 L821.3 412.20 L822.3 412.20 L823.3 411.60 L824.3 410.85 L825.3 410.34 L826.3 409.72 L827.3 410.48 L828.3 411.07 L829.3 412.01 L830.3 412.27 L831.3 411.82 L832.3 412.19 L833.3 412.20 L834.3 412.16 L835.3 412.24 L836.3 411.91 L837.3 412.15 L838.3 412.10 L839.3 412.11 L840.3 412.29 L841.3 411.81 L842.3 412.28 L843.3 412.09 L844.3 412.19 L845.3 412.29 L846.3 411.99 L847.3 412.21 L848.3 412.23 L849.3 412.08 L850.3 412.17 L851.3 411.97 L852.3 412.08 L853.3 412.16 L854.3 412.20 L855.3 411.99 L856.3 411.86 L857.3 412.12 L858.3 412.17 L859.3 412.25 L860.3 412.22 L861.3 411.73 L862.3 412.16 L863.3 412.13 L864.3 412.11 L865.3 412.10 L866.3 411.96 L867.3 411.56 L868.3 410.89 L869.3 410.07 L870.3 409.84 L871.3 410.80 L872.3 411.37 L873.3 412.10 L874.3 412.04 L875.3 412.22 L876.3 412.19 L877.3 412.06 L878.3 411.64 L879.3 412.26 L880.3 412.03 L881.3 412.24 L882.3 411.77 L883.3 412.12 L884.3 412.16 L885.3 412.21 L886.3 412.19 L887 413.2 Z" fill="#e8f0e8" stroke="none" stroke-width="1" opacity="0.9"/>
<rect x="207.30" y="415.00" width="124.70" height="30.60" fill="#2e5a88" />
<g filter="url(#bl1)">
<rect x="208.10" y="415.80" width="123.10" height="22.20" fill="url(#manP)" />
</g>
<rect x="208.10" y="438.00" width="123.10" height="7.00" fill="#4a82ba" />
<path d="M208.3 445.00 L208.3 444.60 L209.4 444.60 L210.5 444.80 L211.6 444.40 L212.7 444.70 L213.8 444.80 L214.9 444.70 L216.0 444.80 L217.1 444.60 L218.2 444.40 L219.3 444.70 L220.4 444.40 L221.5 444.80 L222.6 444.70 L223.7 444.80 L224.8 444.70 L225.9 444.40 L227.0 444.60 L228.1 444.70 L229.2 444.40 L230.3 444.70 L231.4 444.80 L232.5 444.70 L233.6 444.40 L234.7 444.70 L235.8 444.70 L236.9 444.80 L238.0 444.80 L239.1 444.70 L240.2 444.70 L241.3 444.70 L242.4 444.70 L243.5 444.60 L244.6 444.60 L245.7 444.70 L246.8 444.70 L247.9 444.70 L249.0 444.70 L250.1 444.40 L251.2 444.60 L252.3 444.80 L253.4 444.60 L254.5 444.40 L255.6 444.70 L256.7 444.70 L257.8 444.60 L258.9 444.80 L260.0 444.60 L261.1 444.60 L262.2 444.80 L263.3 444.60 L264.4 444.80 L265.5 444.60 L266.6 444.60 L267.7 444.60 L268.8 444.40 L269.9 444.60 L271.0 444.70 L272.1 444.40 L273.2 444.40 L274.3 444.70 L275.4 444.80 L276.5 444.60 L277.6 444.80 L278.7 444.60 L279.8 444.40 L280.9 444.80 L282.0 444.40 L283.1 444.60 L284.2 444.40 L285.3 444.80 L286.4 444.40 L287.5 444.80 L288.6 444.70 L289.7 444.70 L290.8 444.80 L291.9 444.70 L293.0 444.40 L294.1 444.60 L295.2 444.60 L296.3 444.60 L297.4 444.40 L298.5 444.80 L299.6 444.60 L300.7 444.60 L301.8 444.80 L302.9 444.40 L304.0 444.80 L305.1 444.70 L306.2 444.60 L307.3 444.60 L308.4 444.70 L309.5 444.60 L310.6 444.60 L311.7 444.80 L312.8 444.60 L313.9 444.60 L315.0 444.60 L316.1 444.70 L317.2 444.80 L318.3 444.70 L319.4 444.60 L320.5 444.40 L321.6 444.70 L322.7 444.80 L323.8 444.80 L324.9 444.40 L326.0 444.80 L327.1 444.70 L328.2 444.60 L329.3 444.60 L330.4 444.40 L331.0 445.00 Z" fill="#f0f4f8" stroke="none" stroke-width="1" opacity="0.95"/>
<path d="M265.00 424.00 h-1.2 v7 h1.2 M271.00 424.00 h1.2 v7 h-1.2" fill="none" stroke="#e8e8e8" stroke-width="0.7" />
<path d="M266.20 427.50 h3.6" fill="none" stroke="#e8e8e8" stroke-width="0.6" />
<circle cx="266.10" cy="427.50" r="0.55" fill="#e8e8e8"/><circle cx="269.90" cy="427.50" r="0.55" fill="#e8e8e8"/>
<rect x="208.50" y="439.20" width="5.50" height="5.20" fill="#2a2a2e" rx="1"/>
<circle cx="211.25" cy="441.80" r="1.6" fill="none" stroke="#c8c8c8" stroke-width="0.6"/>
<rect x="478.60" y="415.00" width="252.20" height="30.60" fill="#2e5a88" />
<g filter="url(#bl1)">
<rect x="479.40" y="415.80" width="250.60" height="22.20" fill="url(#manP2)" />
</g>
<rect x="479.40" y="438.00" width="250.60" height="7.00" fill="#4a82ba" />
<path d="M479.6 445.00 L479.6 444.80 L480.7 444.40 L481.8 444.60 L482.9 444.80 L484.0 444.80 L485.1 444.70 L486.2 444.40 L487.3 444.60 L488.4 444.60 L489.5 444.80 L490.6 444.60 L491.7 444.40 L492.8 444.70 L493.9 444.40 L495.0 444.80 L496.1 444.70 L497.2 444.60 L498.3 444.80 L499.4 444.40 L500.5 444.60 L501.6 444.80 L502.7 444.60 L503.8 444.40 L504.9 444.60 L506.0 444.40 L507.1 444.80 L508.2 444.70 L509.3 444.60 L510.4 444.80 L511.5 444.80 L512.6 444.70 L513.7 444.60 L514.8 444.40 L515.9 444.70 L517.0 444.80 L518.1 444.60 L519.2 444.70 L520.3 444.40 L521.4 444.60 L522.5 444.60 L523.6 444.80 L524.7 444.80 L525.8 444.70 L526.9 444.80 L528.0 444.60 L529.1 444.60 L530.2 444.70 L531.3 444.40 L532.4 444.40 L533.5 444.70 L534.6 444.70 L535.7 444.70 L536.8 444.80 L537.9 444.70 L539.0 444.70 L540.1 444.80 L541.2 444.60 L542.3 444.60 L543.4 444.60 L544.5 444.40 L545.6 444.40 L546.7 444.60 L547.8 444.70 L548.9 444.40 L550.0 444.80 L551.1 444.70 L552.2 444.40 L553.3 444.40 L554.4 444.80 L555.5 444.40 L556.6 444.70 L557.7 444.80 L558.8 444.40 L559.9 444.40 L561.0 444.40 L562.1 444.80 L563.2 444.40 L564.3 444.40 L565.4 444.60 L566.5 444.40 L567.6 444.80 L568.7 444.70 L569.8 444.60 L570.9 444.40 L572.0 444.40 L573.1 444.70 L574.2 444.80 L575.3 444.80 L576.4 444.80 L577.5 444.60 L578.6 444.60 L579.7 444.70 L580.8 444.60 L581.9 444.40 L583.0 444.60 L584.1 444.60 L585.2 444.40 L586.3 444.40 L587.4 444.40 L588.5 444.60 L589.6 444.40 L590.7 444.40 L591.8 444.40 L592.9 444.70 L594.0 444.40 L595.1 444.40 L596.2 444.60 L597.3 444.40 L598.4 444.60 L599.5 444.60 L600.6 444.70 L601.7 444.40 L602.8 444.60 L603.9 444.60 L605.0 444.40 L606.1 444.40 L607.2 444.70 L608.3 444.60 L609.4 444.80 L610.5 444.40 L611.6 444.80 L612.7 444.70 L613.8 444.80 L614.9 444.80 L616.0 444.60 L617.1 444.60 L618.2 444.40 L619.3 444.80 L620.4 444.70 L621.5 444.70 L622.6 444.60 L623.7 444.80 L624.8 444.40 L625.9 444.40 L627.0 444.80 L628.1 444.40 L629.2 444.70 L630.3 444.80 L631.4 444.60 L632.5 444.60 L633.6 444.70 L634.7 444.70 L635.8 444.60 L636.9 444.70 L638.0 444.80 L639.1 444.80 L640.2 444.80 L641.3 444.80 L642.4 444.40 L643.5 444.40 L644.6 444.80 L645.7 444.80 L646.8 444.70 L647.9 444.80 L649.0 444.70 L650.1 444.60 L651.2 444.40 L652.3 444.40 L653.4 444.80 L654.5 444.70 L655.6 444.70 L656.7 444.40 L657.8 444.40 L658.9 444.40 L660.0 444.40 L661.1 444.60 L662.2 444.40 L663.3 444.80 L664.4 444.60 L665.5 444.60 L666.6 444.60 L667.7 444.60 L668.8 444.80 L669.9 444.80 L671.0 444.60 L672.1 444.60 L673.2 444.60 L674.3 444.40 L675.4 444.40 L676.5 444.40 L677.6 444.60 L678.7 444.80 L679.8 444.80 L680.9 444.70 L682.0 444.70 L683.1 444.80 L684.2 444.70 L685.3 444.60 L686.4 444.60 L687.5 444.80 L688.6 444.80 L689.7 444.70 L690.8 444.40 L691.9 444.60 L693.0 444.80 L694.1 444.70 L695.2 444.80 L696.3 444.40 L697.4 444.70 L698.5 444.40 L699.6 444.40 L700.7 444.80 L701.8 444.70 L702.9 444.80 L704.0 444.60 L705.1 444.80 L706.2 444.70 L707.3 444.70 L708.4 444.70 L709.5 444.60 L710.6 444.70 L711.7 444.40 L712.8 444.70 L713.9 444.70 L715.0 444.70 L716.1 444.40 L717.2 444.70 L718.3 444.60 L719.4 444.70 L720.5 444.80 L721.6 444.40 L722.7 444.70 L723.8 444.60 L724.9 444.40 L726.0 444.40 L727.1 444.80 L728.2 444.40 L729.3 444.70 L729.8 445.00 Z" fill="#f0f4f8" stroke="none" stroke-width="1" opacity="0.95"/>
<path d="M602.00 424.00 h-1.2 v7 h1.2 M608.00 424.00 h1.2 v7 h-1.2" fill="none" stroke="#e8e8e8" stroke-width="0.7" />
<path d="M603.20 427.50 h3.6" fill="none" stroke="#e8e8e8" stroke-width="0.6" />
<circle cx="603.10" cy="427.50" r="0.55" fill="#e8e8e8"/><circle cx="606.90" cy="427.50" r="0.55" fill="#e8e8e8"/>
<rect x="479.80" y="439.20" width="5.50" height="5.20" fill="#2a2a2e" rx="1"/>
<circle cx="482.55" cy="441.80" r="1.6" fill="none" stroke="#c8c8c8" stroke-width="0.6"/>
<rect x="207.30" y="447.00" width="524.20" height="30.60" fill="#2e5a88" />
<g filter="url(#bl1)">
<rect x="208.10" y="447.80" width="522.60" height="21.60" fill="url(#deskP)" />
</g>
<rect x="208.10" y="469.40" width="522.60" height="7.60" fill="#4a82ba" />
<path d="M208.3 477.00 L208.3 476.41 L209.4 476.03 L210.5 475.62 L211.6 474.86 L212.7 474.47 L213.8 474.40 L214.9 474.32 L216.0 475.26 L217.1 475.78 L218.2 476.23 L219.3 476.35 L220.4 476.40 L221.5 476.47 L222.6 476.35 L223.7 476.36 L224.8 476.30 L225.9 476.14 L227.0 476.44 L228.1 476.12 L229.2 476.42 L230.3 476.27 L231.4 476.15 L232.5 476.36 L233.6 476.45 L234.7 476.46 L235.8 476.22 L236.9 476.16 L238.0 476.42 L239.1 476.29 L240.2 476.47 L241.3 476.30 L242.4 476.41 L243.5 476.50 L244.6 476.39 L245.7 476.35 L246.8 476.14 L247.9 476.34 L249.0 476.10 L250.1 475.49 L251.2 475.40 L252.3 474.69 L253.4 474.77 L254.5 474.92 L255.6 475.15 L256.7 475.59 L257.8 476.27 L258.9 476.46 L260.0 476.36 L261.1 476.30 L262.2 476.11 L263.3 476.49 L264.4 476.35 L265.5 475.88 L266.6 475.44 L267.7 474.92 L268.8 474.71 L269.9 473.60 L271.0 473.74 L272.1 473.82 L273.2 475.04 L274.3 475.20 L275.4 476.05 L276.5 476.45 L277.6 476.32 L278.7 476.32 L279.8 476.21 L280.9 476.34 L282.0 476.41 L283.1 476.32 L284.2 476.21 L285.3 476.26 L286.4 476.35 L287.5 476.46 L288.6 475.83 L289.7 475.68 L290.8 475.67 L291.9 475.56 L293.0 476.20 L294.1 476.14 L295.2 476.13 L296.3 476.41 L297.4 476.28 L298.5 476.35 L299.6 476.16 L300.7 476.25 L301.8 476.19 L302.9 476.16 L304.0 476.04 L305.1 475.24 L306.2 474.53 L307.3 473.58 L308.4 473.03 L309.5 473.08 L310.6 473.63 L311.7 473.75 L312.8 474.41 L313.9 474.92 L315.0 475.72 L316.1 476.38 L317.2 476.39 L318.3 476.18 L319.4 476.39 L320.5 476.34 L321.6 476.11 L322.7 476.20 L323.8 476.01 L324.9 475.64 L326.0 475.15 L327.1 475.20 L328.2 474.90 L329.3 475.27 L330.4 476.17 L331.5 476.23 L332.6 476.31 L333.7 476.14 L334.8 476.46 L335.9 476.15 L337.0 476.37 L338.1 476.13 L339.2 476.24 L340.3 476.17 L341.4 476.21 L342.5 476.37 L343.6 476.36 L344.7 476.29 L345.8 476.21 L346.9 476.44 L348.0 476.34 L349.1 476.19 L350.2 476.41 L351.3 476.43 L352.4 476.46 L353.5 476.28 L354.6 476.17 L355.7 476.37 L356.8 476.21 L357.9 476.27 L359.0 476.10 L360.1 476.45 L361.2 476.34 L362.3 475.87 L363.4 475.01 L364.5 474.72 L365.6 474.11 L366.7 473.67 L367.8 473.90 L368.9 474.97 L370.0 475.30 L371.1 476.20 L372.2 476.31 L373.3 476.16 L374.4 476.11 L375.5 476.13 L376.6 476.41 L377.7 476.19 L378.8 476.24 L379.9 476.34 L381.0 476.35 L382.1 476.36 L383.2 476.25 L384.3 476.15 L385.4 476.28 L386.5 476.45 L387.6 476.33 L388.7 476.11 L389.8 476.10 L390.9 476.26 L392.0 476.11 L393.1 476.12 L394.2 476.31 L395.3 476.41 L396.4 476.36 L397.5 476.18 L398.6 476.25 L399.7 476.44 L400.8 476.14 L401.9 476.05 L403.0 475.31 L404.1 474.90 L405.2 474.23 L406.3 474.26 L407.4 474.99 L408.5 475.20 L409.6 475.54 L410.7 476.07 L411.8 476.24 L412.9 476.27 L414.0 476.36 L415.1 476.32 L416.2 476.25 L417.3 475.72 L418.4 475.01 L419.5 474.34 L420.6 474.18 L421.7 473.84 L422.8 473.66 L423.9 474.26 L425.0 473.99 L426.1 473.70 L427.2 474.59 L428.3 475.58 L429.4 476.50 L430.5 476.37 L431.6 476.33 L432.7 476.50 L433.8 476.46 L434.9 476.31 L436.0 476.21 L437.1 476.14 L438.2 476.44 L439.3 476.22 L440.4 476.11 L441.5 475.82 L442.6 475.87 L443.7 476.16 L444.8 476.46 L445.9 476.22 L447.0 476.34 L448.1 476.39 L449.2 476.26 L450.3 476.42 L451.4 476.22 L452.5 476.18 L453.6 476.15 L454.7 476.30 L455.8 476.37 L456.9 476.47 L458.0 475.79 L459.1 474.88 L460.2 474.10 L461.3 474.17 L462.4 474.59 L463.5 474.19 L464.6 475.14 L465.7 475.30 L466.8 475.93 L467.9 476.22 L469.0 476.39 L470.1 476.10 L471.2 476.41 L472.3 476.16 L473.4 476.34 L474.5 476.45 L475.6 476.16 L476.7 475.96 L477.8 475.52 L478.9 474.83 L480.0 475.14 L481.1 475.09 L482.2 475.74 L483.3 476.28 L484.4 476.26 L485.5 476.10 L486.6 476.28 L487.7 476.25 L488.8 476.37 L489.9 476.37 L491.0 476.44 L492.1 476.18 L493.2 476.11 L494.3 476.31 L495.4 476.20 L496.5 476.28 L497.6 476.22 L498.7 476.30 L499.8 476.32 L500.9 476.18 L502.0 476.45 L503.1 476.30 L504.2 476.13 L505.3 476.27 L506.4 476.25 L507.5 476.43 L508.6 476.18 L509.7 476.36 L510.8 476.23 L511.9 476.39 L513.0 476.28 L514.1 476.19 L515.2 475.54 L516.3 474.65 L517.4 474.46 L518.5 474.62 L519.6 474.51 L520.7 474.08 L521.8 474.55 L522.9 475.33 L524.0 475.95 L525.1 476.29 L526.2 476.27 L527.3 476.35 L528.4 476.46 L529.5 476.31 L530.6 476.46 L531.7 476.49 L532.8 476.32 L533.9 475.92 L535.0 475.38 L536.1 475.14 L537.2 475.40 L538.3 475.59 L539.4 475.67 L540.5 476.02 L541.6 476.13 L542.7 476.12 L543.8 476.14 L544.9 476.35 L546.0 476.30 L547.1 476.16 L548.2 476.38 L549.3 476.13 L550.4 476.14 L551.5 476.16 L552.6 476.44 L553.7 476.05 L554.8 475.69 L555.9 475.33 L557.0 474.99 L558.1 474.89 L559.2 474.51 L560.3 475.51 L561.4 475.71 L562.5 476.18 L563.6 476.21 L564.7 476.22 L565.8 476.25 L566.9 476.28 L568.0 476.48 L569.1 476.07 L570.2 475.52 L571.3 474.59 L572.4 473.90 L573.5 474.34 L574.6 472.56 L575.7 473.05 L576.8 473.26 L577.9 474.22 L579.0 474.61 L580.1 475.39 L581.2 475.60 L582.3 476.15 L583.4 476.19 L584.5 476.25 L585.6 476.18 L586.7 476.25 L587.8 476.49 L588.9 476.17 L590.0 476.25 L591.1 476.38 L592.2 476.15 L593.3 476.41 L594.4 476.03 L595.5 476.41 L596.6 476.21 L597.7 476.36 L598.8 476.38 L599.9 476.45 L601.0 476.10 L602.1 476.20 L603.2 476.25 L604.3 476.17 L605.4 476.12 L606.5 476.50 L607.6 476.15 L608.7 476.49 L609.8 476.22 L610.9 476.11 L612.0 475.85 L613.1 475.26 L614.2 475.32 L615.3 475.52 L616.4 475.33 L617.5 475.99 L618.6 476.27 L619.7 476.32 L620.8 476.21 L621.9 476.27 L623.0 476.30 L624.1 476.46 L625.2 476.37 L626.3 476.30 L627.4 476.23 L628.5 475.89 L629.6 475.32 L630.7 475.14 L631.8 475.10 L632.9 474.87 L634.0 475.06 L635.1 475.61 L636.2 476.15 L637.3 476.25 L638.4 476.14 L639.5 476.43 L640.6 476.20 L641.7 476.48 L642.8 476.35 L643.9 476.27 L645.0 476.45 L646.1 476.49 L647.2 476.47 L648.3 476.26 L649.4 476.39 L650.5 476.45 L651.6 476.17 L652.7 476.48 L653.8 476.39 L654.9 476.45 L656.0 476.15 L657.1 476.15 L658.2 476.44 L659.3 476.49 L660.4 476.10 L661.5 476.23 L662.6 476.23 L663.7 476.13 L664.8 476.39 L665.9 476.47 L667.0 475.69 L668.1 475.18 L669.2 473.77 L670.3 474.56 L671.4 473.13 L672.5 474.01 L673.6 473.59 L674.7 474.42 L675.8 475.12 L676.9 475.38 L678.0 475.91 L679.1 476.49 L680.2 476.48 L681.3 476.47 L682.4 476.16 L683.5 476.36 L684.6 475.94 L685.7 475.17 L686.8 474.98 L687.9 474.06 L689.0 474.20 L690.1 474.46 L691.2 474.62 L692.3 475.06 L693.4 475.85 L694.5 476.34 L695.6 476.33 L696.7 476.32 L697.8 476.47 L698.9 476.29 L700.0 476.18 L701.1 476.50 L702.2 476.41 L703.3 476.38 L704.4 476.28 L705.5 476.31 L706.6 476.30 L707.7 475.99 L708.8 475.66 L709.9 475.55 L711.0 475.62 L712.1 476.02 L713.2 476.44 L714.3 476.11 L715.4 476.13 L716.5 476.15 L717.6 476.27 L718.7 476.38 L719.8 476.14 L720.9 476.49 L722.0 476.19 L723.1 475.79 L724.2 475.24 L725.3 475.12 L726.4 473.52 L727.5 473.34 L728.6 473.92 L729.7 474.76 L730.5 477.00 Z" fill="#f0f4f8" stroke="none" stroke-width="1" opacity="0.95"/>
<path d="M464.00 454.50 h-1.2 v7 h1.2 M470.00 454.50 h1.2 v7 h-1.2" fill="none" stroke="#e8e8e8" stroke-width="0.7" />
<path d="M465.20 458.00 h3.6" fill="none" stroke="#e8e8e8" stroke-width="0.6" />
<circle cx="465.10" cy="458.00" r="0.55" fill="#e8e8e8"/><circle cx="468.90" cy="458.00" r="0.55" fill="#e8e8e8"/>
<rect x="208.50" y="470.60" width="5.50" height="5.20" fill="#2a2a2e" rx="1"/>
<circle cx="211.25" cy="473.20" r="1.6" fill="none" stroke="#c8c8c8" stroke-width="0.6"/>
<rect x="732.20" y="447.00" width="155.30" height="30.60" fill="#2e5a88" />
<g filter="url(#bl1)">
<rect x="733.00" y="447.80" width="153.70" height="21.60" fill="url(#deskP)" />
</g>
<rect x="733.00" y="469.40" width="153.70" height="7.60" fill="#4a82ba" />
<path d="M733.2 477.00 L733.2 475.91 L734.3 476.44 L735.4 476.50 L736.5 476.14 L737.6 476.28 L738.7 476.48 L739.8 476.22 L740.9 476.21 L742.0 476.40 L743.1 476.30 L744.2 476.26 L745.3 476.35 L746.4 476.40 L747.5 476.23 L748.6 476.33 L749.7 476.39 L750.8 476.39 L751.9 476.42 L753.0 476.15 L754.1 476.35 L755.2 476.49 L756.3 476.14 L757.4 476.26 L758.5 476.27 L759.6 476.42 L760.7 476.47 L761.8 476.49 L762.9 476.30 L764.0 476.33 L765.1 476.21 L766.2 475.96 L767.3 475.66 L768.4 476.11 L769.5 476.20 L770.6 476.39 L771.7 476.10 L772.8 476.22 L773.9 476.41 L775.0 476.48 L776.1 476.23 L777.2 476.19 L778.3 476.36 L779.4 476.27 L780.5 475.81 L781.6 475.48 L782.7 474.69 L783.8 474.61 L784.9 474.31 L786.0 474.16 L787.1 474.33 L788.2 474.97 L789.3 475.53 L790.4 476.22 L791.5 476.20 L792.6 476.41 L793.7 476.34 L794.8 476.16 L795.9 476.23 L797.0 476.16 L798.1 476.48 L799.2 476.43 L800.3 476.11 L801.4 476.50 L802.5 476.30 L803.6 475.82 L804.7 476.05 L805.8 476.11 L806.9 476.47 L808.0 476.22 L809.1 476.32 L810.2 476.19 L811.3 476.15 L812.4 476.21 L813.5 476.15 L814.6 476.46 L815.7 476.29 L816.8 476.25 L817.9 476.19 L819.0 476.36 L820.1 475.32 L821.2 474.98 L822.3 473.59 L823.4 473.20 L824.5 473.26 L825.6 473.71 L826.7 474.23 L827.8 474.97 L828.9 475.23 L830.0 475.84 L831.1 476.16 L832.2 476.22 L833.3 476.30 L834.4 476.48 L835.5 476.06 L836.6 475.58 L837.7 474.90 L838.8 474.86 L839.9 473.99 L841.0 473.97 L842.1 474.47 L843.2 474.44 L844.3 474.86 L845.4 475.17 L846.5 476.10 L847.6 476.37 L848.7 476.50 L849.8 476.26 L850.9 476.11 L852.0 476.46 L853.1 476.41 L854.2 476.42 L855.3 476.46 L856.4 476.12 L857.5 476.35 L858.6 476.31 L859.7 476.35 L860.8 476.41 L861.9 476.27 L863.0 476.32 L864.1 476.49 L865.2 476.18 L866.3 476.40 L867.4 476.26 L868.5 476.48 L869.6 476.38 L870.7 476.11 L871.8 476.14 L872.9 476.15 L874.0 476.11 L875.1 476.37 L876.2 476.26 L877.3 475.54 L878.4 475.24 L879.5 474.70 L880.6 474.26 L881.7 474.78 L882.8 474.91 L883.9 475.31 L885.0 475.88 L886.1 476.24 L886.5 477.00 Z" fill="#f0f4f8" stroke="none" stroke-width="1" opacity="0.95"/>
<path d="M807.00 454.50 h-1.2 v7 h1.2 M813.00 454.50 h1.2 v7 h-1.2" fill="none" stroke="#e8e8e8" stroke-width="0.7" />
<path d="M808.20 458.00 h3.6" fill="none" stroke="#e8e8e8" stroke-width="0.6" />
<circle cx="808.10" cy="458.00" r="0.55" fill="#e8e8e8"/><circle cx="811.90" cy="458.00" r="0.55" fill="#e8e8e8"/>
<rect x="733.20" y="470.60" width="5.50" height="5.20" fill="#2a2a2e" rx="1"/>
<circle cx="735.95" cy="473.20" r="1.6" fill="none" stroke="#c8c8c8" stroke-width="0.6"/>
</g>
<rect x="546.50" y="336.00" width="1.40" height="141.50" fill="#cc3a2e" />
<path d="M543.8 335 h6.6 v1.6 l-3.3 2.4 l-3.3 -2.4z" fill="#f04a3a" stroke="none" stroke-width="1" />
<rect x="113.00" y="477.40" width="774.00" height="13.10" fill="#161618" />
<rect x="379.30" y="477.60" width="48.00" height="12.60" fill="#050505" />
<rect x="379.30" y="489.20" width="48.00" height="1.20" fill="#e8402a" />
<circle cx="127.60" cy="482.70" r="1.55" fill="#e8e8e8"/>
<circle cx="125.40" cy="486.20" r="1.55" fill="#e8e8e8"/>
<circle cx="129.80" cy="486.20" r="1.55" fill="#e8e8e8"/>
<text x="134.60" y="486.99" font-size="6.0" fill="#e0e0e0" font-weight="bold" text-anchor="start" font-family="Liberation Sans" textLength="66.40" lengthAdjust="spacingAndGlyphs">DaVinci Resolve Studio 20</text>
<path d="M352.5 481.8 h6.5 v5 h-6.5z M353.5 481 h4.5" fill="none" stroke="#6a6a6e" stroke-width="0.6" />
<path d="M401 487 l3 -5.5 M404.5 487 l3 -5.5" fill="none" stroke="#3a7ad0" stroke-width="1.1" />
<path d="M400 481.5 h2.5 M405.5 487 h2.5" fill="none" stroke="#3a7ad0" stroke-width="0.8" />
<rect x="403.80" y="480.50" width="0.60" height="8.00" fill="#d03030" />
<path d="M449 486.8 h7 M450.5 486.8 v-4.5 M453 486.8 v-3 M455 486.8 v-5.2 M449 482.5 h2.5" fill="none" stroke="#6a6a6e" stroke-width="0.8" />
<path d="M498.5 487.5 l4.5 -5 M501.5 481 l2.5 2.5 l1 -2" fill="none" stroke="#6a6a6e" stroke-width="0.8" />
<circle cx="548" cy="484.8" r="2.6" fill="none" stroke="#6a6a6e" stroke-width="0.7"/>
<circle cx="548" cy="484.8" r="0.8" fill="#6a6a6e"/>
<path d="M595 487 v-5 l3.5 -0.8 v4.5" fill="none" stroke="#6a6a6e" stroke-width="0.7" />
<circle cx="594.3" cy="487" r="1" fill="#6a6a6e"/><circle cx="597.8" cy="486.2" r="1" fill="#6a6a6e"/>
<path d="M642.5 487.8 l2.5 -2.5 M644 481 l3.5 3.5 l-1.5 1.5 l-3.5 -3.5z M646.5 480.8 l1.5 1.5" fill="none" stroke="#6a6a6e" stroke-width="0.7" />
<path d="M771 481.2 h5 v6 h-5z M771.5 483 h4 M771.5 485 h4 M776.8 486.5 l1.5 -1.5" fill="none" stroke="#7a7a7e" stroke-width="0.6" />
<path d="M791.2 486.2 a2 2 0 0 1 0.5 -3.9 a2.6 2.6 0 0 1 5 0.2 a1.9 1.9 0 0 1 0.2 3.7 z" fill="none" stroke="#3a8ae0" stroke-width="0.8" />
<rect x="790.50" y="488.00" width="8.00" height="0.60" fill="#3a8ae0" />
<path d="M810.8 486.5 a3.2 2.4 0 1 1 1.6 0.6 l-1.6 1.2z" fill="#8a8a8e" stroke="none" stroke-width="1" />
<path d="M829.5 488 q0 -2.5 2.3 -2.5 q2.3 0 2.3 2.5z M833 488 q0 -2 2 -2 q2 0 2 2z" fill="#8a8a8e" stroke="none" stroke-width="1" />
<circle cx="831.8" cy="483" r="1.3" fill="#8a8a8e"/><circle cx="835" cy="483.5" r="1.1" fill="#8a8a8e"/>
<path d="M850.4 484.6 l2.8 -2.6 l2.8 2.6 v3 h-2 v-1.6 h-1.6 v1.6 h-2z" fill="#9a9a9e" stroke="none" stroke-width="1" />
<circle cx="873.1" cy="485" r="2.2" fill="none" stroke="#9a9a9e" stroke-width="1.2"/>
<rect x="414.50" y="82.20" width="445.50" height="0.80" fill="#0e0e10" />
<rect x="112.50" y="50.00" width="1.05" height="445.00" fill="#ffffff" />
</svg></div></body></html>
